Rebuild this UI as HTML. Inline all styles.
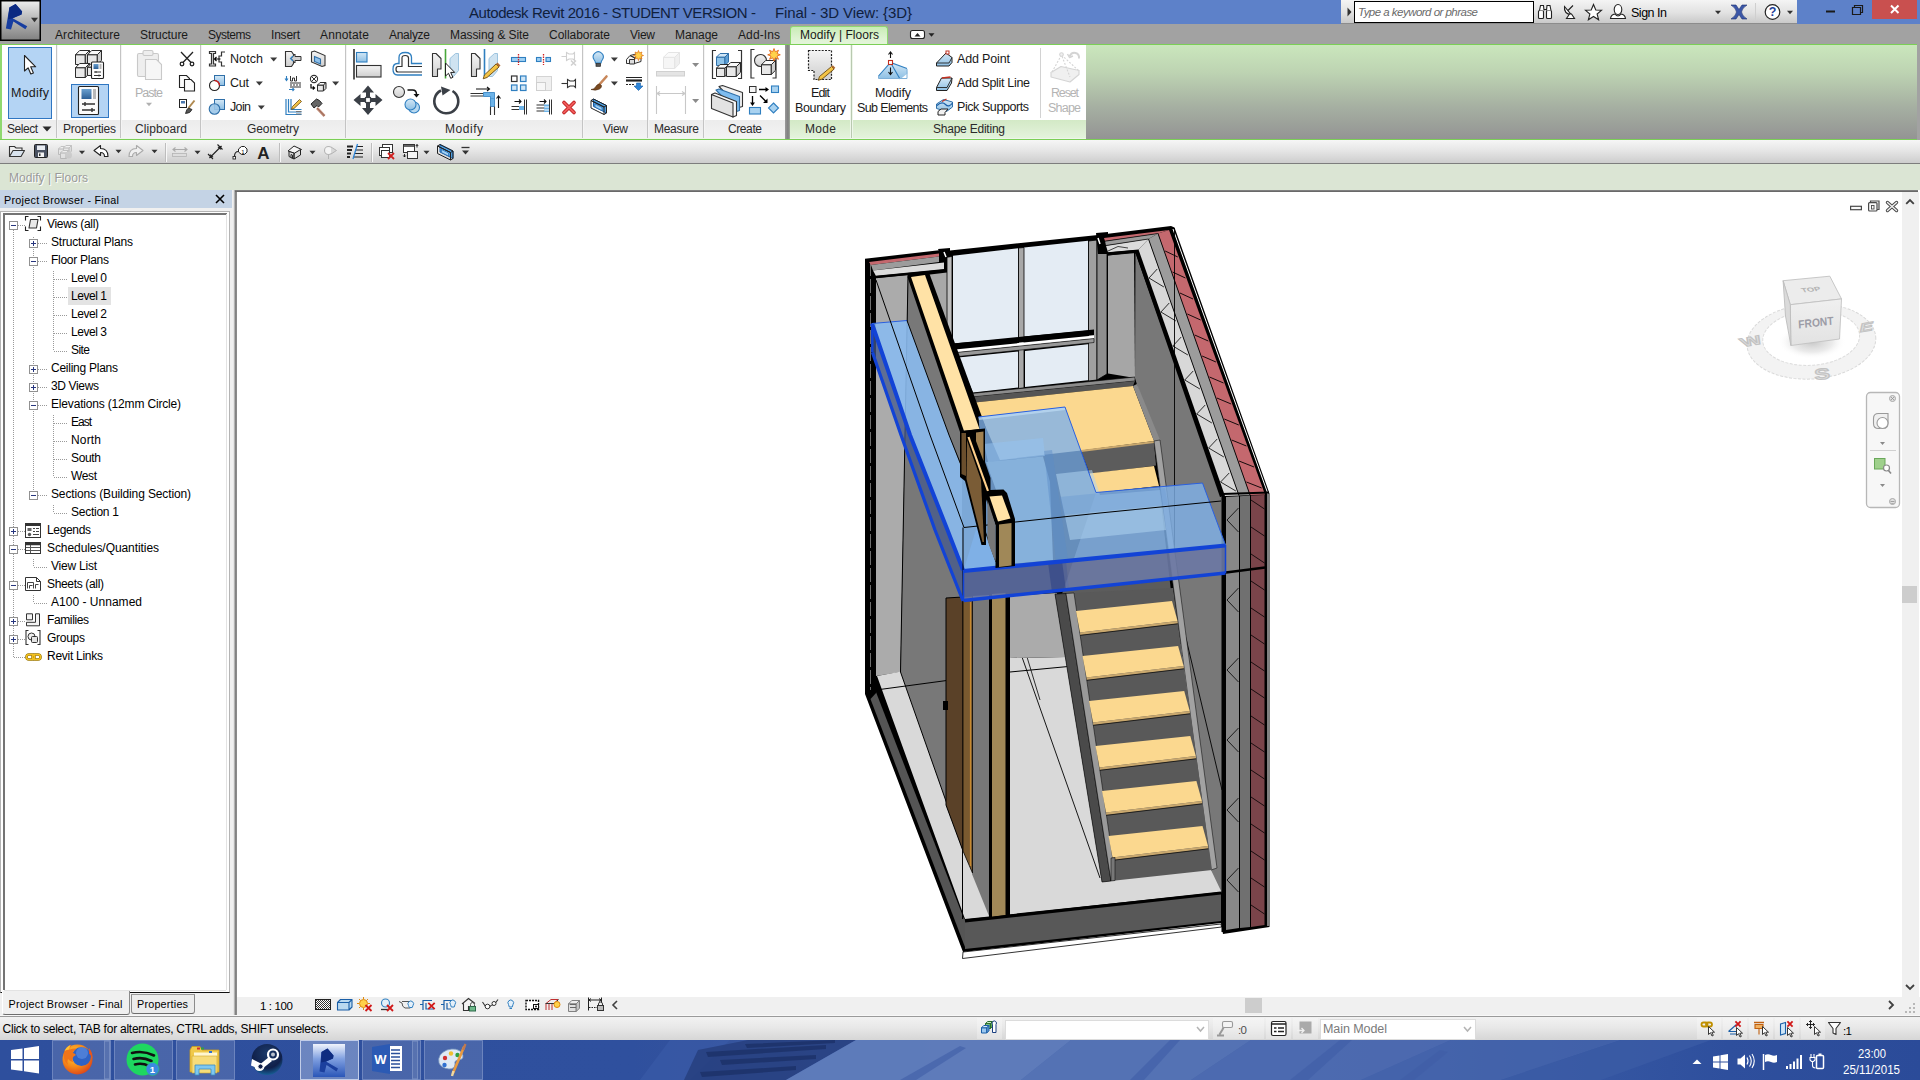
<!DOCTYPE html>
<html><head><meta charset="utf-8"><title>Autodesk Revit 2016</title>
<style>
html,body{margin:0;padding:0;}
body{width:1920px;height:1080px;overflow:hidden;position:relative;background:#fff;font-family:"Liberation Sans",sans-serif;}
.r{position:absolute;box-sizing:border-box;display:block;}
.t{position:absolute;white-space:pre;line-height:16px;height:16px;font-family:"Liberation Sans",sans-serif;}
</style></head><body>
<div class="r" style="left:0px;top:0px;width:1920px;height:24px;background:#5d81c9;"></div>
<div class="r" style="left:1341px;top:0px;width:456px;height:24px;background:linear-gradient(#f4f4f4,#e2e2e2 55%,#c9c9c9);border-bottom:1px solid #8c8c8c;"></div>
<div class="r" style="left:1354px;top:1px;width:180px;height:22px;background:#fff;border:1px solid #000;"></div>
<span class="t" style="left:1358px;top:4.02px;font-size:11.5px;color:#6a6a6a;letter-spacing:-0.526px;font-style:italic;">Type a keyword or phrase</span>
<span class="t" style="left:1631px;top:4.67px;font-size:12.5px;color:#000;letter-spacing:-0.486px;">Sign In</span>
<div class="r" style="left:1872px;top:0px;width:45px;height:19px;background:#c9504f;"></div>
<span class="t" style="left:469px;top:4.80px;font-size:15px;color:#10203c;letter-spacing:-0.425px;">Autodesk Revit 2016 - STUDENT VERSION -</span>
<span class="t" style="left:775px;top:4.80px;font-size:15px;color:#10203c;letter-spacing:-0.098px;">Final - 3D View: {3D}</span>
<div class="r" style="left:0px;top:24px;width:1920px;height:21px;background:#a2a2a2;"></div>
<div class="r" style="left:790px;top:26px;width:98px;height:20px;background:linear-gradient(#c9ecb6,#def3d2 60%,#e6f5dd);border:1px solid #8fd870;border-bottom:none;border-radius:3px 3px 0 0;"></div>
<span class="t" style="left:55px;top:26.84px;font-size:12px;color:#1a1a1a;letter-spacing:0.089px;">Architecture</span>
<span class="t" style="left:140px;top:26.84px;font-size:12px;color:#1a1a1a;letter-spacing:-0.086px;">Structure</span>
<span class="t" style="left:208px;top:26.84px;font-size:12px;color:#1a1a1a;letter-spacing:-0.501px;">Systems</span>
<span class="t" style="left:271px;top:26.84px;font-size:12px;color:#1a1a1a;letter-spacing:-0.202px;">Insert</span>
<span class="t" style="left:320px;top:26.84px;font-size:12px;color:#1a1a1a;letter-spacing:0.137px;">Annotate</span>
<span class="t" style="left:389px;top:26.84px;font-size:12px;color:#1a1a1a;letter-spacing:-0.282px;">Analyze</span>
<span class="t" style="left:450px;top:26.84px;font-size:12px;color:#1a1a1a;letter-spacing:-0.080px;">Massing &amp; Site</span>
<span class="t" style="left:549px;top:26.84px;font-size:12px;color:#1a1a1a;letter-spacing:-0.037px;">Collaborate</span>
<span class="t" style="left:630px;top:26.84px;font-size:12px;color:#1a1a1a;letter-spacing:-0.264px;">View</span>
<span class="t" style="left:675px;top:26.84px;font-size:12px;color:#1a1a1a;letter-spacing:-0.073px;">Manage</span>
<span class="t" style="left:738px;top:26.84px;font-size:12px;color:#1a1a1a;letter-spacing:0.107px;">Add-Ins</span>
<span class="t" style="left:800px;top:26.84px;font-size:12px;color:#1a1a1a;letter-spacing:0.038px;">Modify | Floors</span>
<div class="r" style="left:0px;top:44px;width:1920px;height:96px;background:linear-gradient(#cbe7bd,#bdd3b2 30%,#a6b0a2 65%,#939393 100%);"></div>
<div class="r" style="left:0px;top:44px;width:1920px;height:1px;background:#7bcf56;"></div>
<div class="r" style="left:0px;top:139px;width:1920px;height:1px;background:#7bcf56;"></div>
<div class="r" style="left:0px;top:138px;width:1086px;height:1px;background:#eef6ea;"></div>
<div class="r" style="left:0px;top:45px;width:2px;height:94px;background:#8fd870;"></div>
<div class="r" style="left:1917px;top:44px;width:3px;height:96px;background:#a2a2a2;"></div>
<div class="r" style="left:2px;top:45px;width:54px;height:75px;background:#fff;"></div>
<div class="r" style="left:2px;top:120px;width:54px;height:18px;background:linear-gradient(#ececec,#f3f3f3);"></div>
<span class="t" style="left:7px;top:121.24px;font-size:12px;color:#2a2a2a;letter-spacing:-0.470px;">Select</span>
<div class="r" style="left:58px;top:45px;width:62px;height:75px;background:#fff;"></div>
<div class="r" style="left:58px;top:120px;width:62px;height:18px;background:linear-gradient(#ececec,#f3f3f3);"></div>
<span class="t" style="left:63px;top:121.24px;font-size:12px;color:#2a2a2a;letter-spacing:-0.188px;">Properties</span>
<div class="r" style="left:122px;top:45px;width:78px;height:75px;background:#fff;"></div>
<div class="r" style="left:122px;top:120px;width:78px;height:18px;background:linear-gradient(#ececec,#f3f3f3);"></div>
<span class="t" style="left:135px;top:121.24px;font-size:12px;color:#2a2a2a;letter-spacing:0.080px;">Clipboard</span>
<div class="r" style="left:202px;top:45px;width:143px;height:75px;background:#fff;"></div>
<div class="r" style="left:202px;top:120px;width:143px;height:18px;background:linear-gradient(#ececec,#f3f3f3);"></div>
<span class="t" style="left:247px;top:121.24px;font-size:12px;color:#2a2a2a;letter-spacing:-0.097px;">Geometry</span>
<div class="r" style="left:347px;top:45px;width:235px;height:75px;background:#fff;"></div>
<div class="r" style="left:347px;top:120px;width:235px;height:18px;background:linear-gradient(#ececec,#f3f3f3);"></div>
<span class="t" style="left:445px;top:121.24px;font-size:12px;color:#2a2a2a;letter-spacing:0.531px;">Modify</span>
<div class="r" style="left:584px;top:45px;width:63px;height:75px;background:#fff;"></div>
<div class="r" style="left:584px;top:120px;width:63px;height:18px;background:linear-gradient(#ececec,#f3f3f3);"></div>
<span class="t" style="left:603px;top:121.24px;font-size:12px;color:#2a2a2a;letter-spacing:-0.264px;">View</span>
<div class="r" style="left:649px;top:45px;width:54px;height:75px;background:#fff;"></div>
<div class="r" style="left:649px;top:120px;width:54px;height:18px;background:linear-gradient(#ececec,#f3f3f3);"></div>
<span class="t" style="left:654px;top:121.24px;font-size:12px;color:#2a2a2a;letter-spacing:-0.281px;">Measure</span>
<div class="r" style="left:705px;top:45px;width:80px;height:75px;background:#fff;"></div>
<div class="r" style="left:705px;top:120px;width:80px;height:18px;background:linear-gradient(#ececec,#f3f3f3);"></div>
<span class="t" style="left:728px;top:121.24px;font-size:12px;color:#2a2a2a;letter-spacing:-0.404px;">Create</span>
<div class="r" style="left:790px;top:45px;width:60px;height:75px;background:#fff;"></div>
<div class="r" style="left:790px;top:120px;width:60px;height:18px;background:linear-gradient(#d3e9c6,#e4f3dc);"></div>
<span class="t" style="left:805px;top:121.24px;font-size:12px;color:#2a2a2a;letter-spacing:0.327px;">Mode</span>
<div class="r" style="left:853px;top:45px;width:233px;height:75px;background:#fff;"></div>
<div class="r" style="left:853px;top:120px;width:233px;height:18px;background:linear-gradient(#d3e9c6,#e4f3dc);"></div>
<span class="t" style="left:933px;top:121.24px;font-size:12px;color:#2a2a2a;letter-spacing:-0.227px;">Shape Editing</span>
<div class="r" style="left:56px;top:45px;width:2px;height:93px;background:linear-gradient(90deg,#c4c4c4 50%,#f4f4f4 50%);"></div>
<div class="r" style="left:120px;top:45px;width:2px;height:93px;background:linear-gradient(90deg,#c4c4c4 50%,#f4f4f4 50%);"></div>
<div class="r" style="left:200px;top:45px;width:2px;height:93px;background:linear-gradient(90deg,#c4c4c4 50%,#f4f4f4 50%);"></div>
<div class="r" style="left:345px;top:45px;width:2px;height:93px;background:linear-gradient(90deg,#c4c4c4 50%,#f4f4f4 50%);"></div>
<div class="r" style="left:582px;top:45px;width:2px;height:93px;background:linear-gradient(90deg,#c4c4c4 50%,#f4f4f4 50%);"></div>
<div class="r" style="left:647px;top:45px;width:2px;height:93px;background:linear-gradient(90deg,#c4c4c4 50%,#f4f4f4 50%);"></div>
<div class="r" style="left:703px;top:45px;width:2px;height:93px;background:linear-gradient(90deg,#c4c4c4 50%,#f4f4f4 50%);"></div>
<div class="r" style="left:785px;top:45px;width:5px;height:94px;background:linear-gradient(90deg,#9a9a9a,#7e7e7e 60%,#a0a89c);"></div>
<div class="r" style="left:850px;top:45px;width:3px;height:93px;background:linear-gradient(90deg,#eef6ea 33%,#b9c9b0 33%,#b9c9b0 66%,#eef6ea 66%);"></div>
<div class="r" style="left:1040px;top:48px;width:1px;height:70px;background:#d2d2d2;"></div>
<svg class="r" style="left:42px;top:126px;" width="10" height="6" viewBox="0 0 10 6"><path d="M0.5 0.5h9l-4.5 5z" fill="#2a2a2a"/></svg>
<div class="r" style="left:8px;top:47px;width:44px;height:72px;background:#b4d4f4;border:1px solid #2f76c2;"></div>
<span class="t" style="left:11px;top:84.67px;font-size:12.5px;color:#1a1a1a;letter-spacing:0.237px;">Modify</span>
<div class="r" style="left:71px;top:84px;width:38px;height:34px;background:#b4d4f4;border:1px solid #2f76c2;"></div>
<span class="t" style="left:135px;top:84.67px;font-size:12.5px;color:#b0b0b0;letter-spacing:-0.991px;">Paste</span>
<span class="t" style="left:230px;top:50.67px;font-size:12.5px;color:#1a1a1a;letter-spacing:0.087px;">Notch</span>
<span class="t" style="left:230px;top:74.67px;font-size:12.5px;color:#1a1a1a;letter-spacing:-0.226px;">Cut</span>
<span class="t" style="left:230px;top:98.67px;font-size:12.5px;color:#1a1a1a;letter-spacing:-0.644px;">Join</span>
<span class="t" style="left:811px;top:84.67px;font-size:12.5px;color:#1a1a1a;letter-spacing:-0.846px;">Edit</span>
<span class="t" style="left:795px;top:99.67px;font-size:12.5px;color:#1a1a1a;letter-spacing:-0.359px;">Boundary</span>
<span class="t" style="left:875px;top:84.67px;font-size:12.5px;color:#1a1a1a;letter-spacing:-0.163px;">Modify</span>
<span class="t" style="left:857px;top:99.67px;font-size:12.5px;color:#1a1a1a;letter-spacing:-0.620px;">Sub Elements</span>
<span class="t" style="left:957px;top:50.67px;font-size:12.5px;color:#1a1a1a;letter-spacing:-0.151px;">Add Point</span>
<span class="t" style="left:957px;top:74.67px;font-size:12.5px;color:#1a1a1a;letter-spacing:-0.318px;">Add Split Line</span>
<span class="t" style="left:957px;top:98.67px;font-size:12.5px;color:#1a1a1a;letter-spacing:-0.427px;">Pick Supports</span>
<span class="t" style="left:1051px;top:84.67px;font-size:12.5px;color:#b4b4b4;letter-spacing:-1.163px;">Reset</span>
<span class="t" style="left:1048px;top:99.67px;font-size:12.5px;color:#b4b4b4;letter-spacing:-0.786px;">Shape</span>
<div class="r" style="left:0px;top:140px;width:1920px;height:24px;background:linear-gradient(#f6f6f6,#e6e6e6 45%,#cdcdcd);border-bottom:1px solid #7d7d7d;"></div>
<div class="r" style="left:0px;top:164px;width:1920px;height:26px;background:#dbe5d4;"></div>
<span class="t" style="left:10px;top:171.34px;font-size:12px;color:#fff;letter-spacing:0.038px;">Modify | Floors</span>
<span class="t" style="left:9px;top:170.34px;font-size:12px;color:#9a9a9a;letter-spacing:0.038px;">Modify | Floors</span>
<div class="r" style="left:0px;top:190px;width:236px;height:826px;background:#f0f0f0;"></div>
<div class="r" style="left:0px;top:190px;width:232px;height:18px;background:#c4d3e5;"></div>
<div class="r" style="left:232px;top:190px;width:4px;height:825px;background:linear-gradient(90deg,#f0f0f0 0,#f0f0f0 25%,#e4e4e4 40%,#a4a4a4 70%,#6a6a6a 100%);"></div>
<span class="t" style="left:4px;top:191.86px;font-size:10.8px;color:#000;letter-spacing:0.262px;">Project Browser - Final</span>
<svg class="r" style="left:215px;top:194px;" width="10" height="10" viewBox="0 0 10 10"><path d="M1 1l8 8M9 1l-8 8" stroke="#000" stroke-width="1.6" fill="none"/></svg>
<div class="r" style="left:0px;top:211px;width:230px;height:782px;background:#fff;border:1px solid #b4b4b4;border-bottom:1px solid #111;"></div>
<div class="r" style="left:3px;top:213px;width:1.6px;height:777px;background:#747474;"></div>
<div class="r" style="left:3px;top:213px;width:224px;height:1.6px;background:#747474;"></div>
<div class="r" style="left:225.5px;top:214px;width:1px;height:776px;background:#e3e3e3;"></div>
<div class="r" style="left:4px;top:989.5px;width:222px;height:1px;background:#e3e3e3;"></div>
<div class="r" style="left:68px;top:287px;width:43px;height:18px;background:#e3e3e3;"></div>
<span class="t" style="left:47px;top:215.84px;font-size:12px;color:#000;letter-spacing:-0.313px;">Views (all)</span>
<span class="t" style="left:51px;top:233.84px;font-size:12px;color:#000;letter-spacing:-0.180px;">Structural Plans</span>
<span class="t" style="left:51px;top:251.84px;font-size:12px;color:#000;letter-spacing:-0.269px;">Floor Plans</span>
<span class="t" style="left:71px;top:269.84px;font-size:12px;color:#000;letter-spacing:-0.449px;">Level 0</span>
<span class="t" style="left:71px;top:287.84px;font-size:12px;color:#000;letter-spacing:-0.449px;">Level 1</span>
<span class="t" style="left:71px;top:305.84px;font-size:12px;color:#000;letter-spacing:-0.449px;">Level 2</span>
<span class="t" style="left:71px;top:323.84px;font-size:12px;color:#000;letter-spacing:-0.449px;">Level 3</span>
<span class="t" style="left:71px;top:341.84px;font-size:12px;color:#000;letter-spacing:-0.559px;">Site</span>
<span class="t" style="left:51px;top:359.84px;font-size:12px;color:#000;letter-spacing:-0.253px;">Ceiling Plans</span>
<span class="t" style="left:51px;top:377.84px;font-size:12px;color:#000;letter-spacing:-0.352px;">3D Views</span>
<span class="t" style="left:51px;top:395.84px;font-size:12px;color:#000;letter-spacing:-0.175px;">Elevations (12mm Circle)</span>
<span class="t" style="left:71px;top:413.84px;font-size:12px;color:#000;letter-spacing:-1.004px;">East</span>
<span class="t" style="left:71px;top:431.84px;font-size:12px;color:#000;letter-spacing:0.164px;">North</span>
<span class="t" style="left:71px;top:449.84px;font-size:12px;color:#000;letter-spacing:-0.340px;">South</span>
<span class="t" style="left:71px;top:467.84px;font-size:12px;color:#000;letter-spacing:-0.372px;">West</span>
<span class="t" style="left:51px;top:485.84px;font-size:12px;color:#000;letter-spacing:-0.131px;">Sections (Building Section)</span>
<span class="t" style="left:71px;top:503.84px;font-size:12px;color:#000;letter-spacing:-0.254px;">Section 1</span>
<span class="t" style="left:47px;top:521.84px;font-size:12px;color:#000;letter-spacing:-0.341px;">Legends</span>
<span class="t" style="left:47px;top:539.84px;font-size:12px;color:#000;letter-spacing:-0.074px;">Schedules/Quantities</span>
<span class="t" style="left:51px;top:557.84px;font-size:12px;color:#000;letter-spacing:-0.225px;">View List</span>
<span class="t" style="left:47px;top:575.84px;font-size:12px;color:#000;letter-spacing:-0.336px;">Sheets (all)</span>
<span class="t" style="left:51px;top:593.84px;font-size:12px;color:#000;letter-spacing:0.021px;">A100 - Unnamed</span>
<span class="t" style="left:47px;top:611.84px;font-size:12px;color:#000;letter-spacing:-0.382px;">Families</span>
<span class="t" style="left:47px;top:629.84px;font-size:12px;color:#000;letter-spacing:-0.270px;">Groups</span>
<span class="t" style="left:47px;top:647.84px;font-size:12px;color:#000;letter-spacing:-0.269px;">Revit Links</span>
<svg class="r" style="left:0px;top:192px;" width="232" height="500" viewBox="0 192 232 500"><path d="M13.5 230V657" stroke="#9a9a9a" stroke-width="1" stroke-dasharray="1 1"/><path d="M33.5 237V495" stroke="#9a9a9a" stroke-width="1" stroke-dasharray="1 1"/><path d="M53.5 271V351" stroke="#9a9a9a" stroke-width="1" stroke-dasharray="1 1"/><path d="M53.5 415V477" stroke="#9a9a9a" stroke-width="1" stroke-dasharray="1 1"/><path d="M53.5 505V513" stroke="#9a9a9a" stroke-width="1" stroke-dasharray="1 1"/><path d="M33.5 559V567" stroke="#9a9a9a" stroke-width="1" stroke-dasharray="1 1"/><path d="M33.5 595V603" stroke="#9a9a9a" stroke-width="1" stroke-dasharray="1 1"/><path d="M18 225.5H26" stroke="#9a9a9a" stroke-width="1" stroke-dasharray="1 1"/><path d="M18 531.5H26" stroke="#9a9a9a" stroke-width="1" stroke-dasharray="1 1"/><path d="M18 549.5H26" stroke="#9a9a9a" stroke-width="1" stroke-dasharray="1 1"/><path d="M18 585.5H26" stroke="#9a9a9a" stroke-width="1" stroke-dasharray="1 1"/><path d="M18 621.5H26" stroke="#9a9a9a" stroke-width="1" stroke-dasharray="1 1"/><path d="M18 639.5H26" stroke="#9a9a9a" stroke-width="1" stroke-dasharray="1 1"/><path d="M14 657.5H26" stroke="#9a9a9a" stroke-width="1" stroke-dasharray="1 1"/><path d="M38 243.5H48" stroke="#9a9a9a" stroke-width="1" stroke-dasharray="1 1"/><path d="M38 261.5H48" stroke="#9a9a9a" stroke-width="1" stroke-dasharray="1 1"/><path d="M38 369.5H48" stroke="#9a9a9a" stroke-width="1" stroke-dasharray="1 1"/><path d="M38 387.5H48" stroke="#9a9a9a" stroke-width="1" stroke-dasharray="1 1"/><path d="M38 405.5H48" stroke="#9a9a9a" stroke-width="1" stroke-dasharray="1 1"/><path d="M38 495.5H48" stroke="#9a9a9a" stroke-width="1" stroke-dasharray="1 1"/><path d="M54 279.5H68" stroke="#9a9a9a" stroke-width="1" stroke-dasharray="1 1"/><path d="M54 297.5H68" stroke="#9a9a9a" stroke-width="1" stroke-dasharray="1 1"/><path d="M54 315.5H68" stroke="#9a9a9a" stroke-width="1" stroke-dasharray="1 1"/><path d="M54 333.5H68" stroke="#9a9a9a" stroke-width="1" stroke-dasharray="1 1"/><path d="M54 351.5H68" stroke="#9a9a9a" stroke-width="1" stroke-dasharray="1 1"/><path d="M54 423.5H68" stroke="#9a9a9a" stroke-width="1" stroke-dasharray="1 1"/><path d="M54 441.5H68" stroke="#9a9a9a" stroke-width="1" stroke-dasharray="1 1"/><path d="M54 459.5H68" stroke="#9a9a9a" stroke-width="1" stroke-dasharray="1 1"/><path d="M54 477.5H68" stroke="#9a9a9a" stroke-width="1" stroke-dasharray="1 1"/><path d="M54 513.5H68" stroke="#9a9a9a" stroke-width="1" stroke-dasharray="1 1"/><path d="M34 567.5H48" stroke="#9a9a9a" stroke-width="1" stroke-dasharray="1 1"/><path d="M34 603.5H48" stroke="#9a9a9a" stroke-width="1" stroke-dasharray="1 1"/><rect x="9.5" y="221.5" width="8" height="8" fill="#fff" stroke="#919191"/><path d="M11 225.5h5" stroke="#27367e" stroke-width="1"/><rect x="9.5" y="527.5" width="8" height="8" fill="#fff" stroke="#919191"/><path d="M11 531.5h5" stroke="#27367e" stroke-width="1"/><path d="M13.5 529v5" stroke="#27367e" stroke-width="1"/><rect x="9.5" y="545.5" width="8" height="8" fill="#fff" stroke="#919191"/><path d="M11 549.5h5" stroke="#27367e" stroke-width="1"/><rect x="9.5" y="581.5" width="8" height="8" fill="#fff" stroke="#919191"/><path d="M11 585.5h5" stroke="#27367e" stroke-width="1"/><rect x="9.5" y="617.5" width="8" height="8" fill="#fff" stroke="#919191"/><path d="M11 621.5h5" stroke="#27367e" stroke-width="1"/><path d="M13.5 619v5" stroke="#27367e" stroke-width="1"/><rect x="9.5" y="635.5" width="8" height="8" fill="#fff" stroke="#919191"/><path d="M11 639.5h5" stroke="#27367e" stroke-width="1"/><path d="M13.5 637v5" stroke="#27367e" stroke-width="1"/><rect x="29.5" y="239.5" width="8" height="8" fill="#fff" stroke="#919191"/><path d="M31 243.5h5" stroke="#27367e" stroke-width="1"/><path d="M33.5 241v5" stroke="#27367e" stroke-width="1"/><rect x="29.5" y="257.5" width="8" height="8" fill="#fff" stroke="#919191"/><path d="M31 261.5h5" stroke="#27367e" stroke-width="1"/><rect x="29.5" y="365.5" width="8" height="8" fill="#fff" stroke="#919191"/><path d="M31 369.5h5" stroke="#27367e" stroke-width="1"/><path d="M33.5 367v5" stroke="#27367e" stroke-width="1"/><rect x="29.5" y="383.5" width="8" height="8" fill="#fff" stroke="#919191"/><path d="M31 387.5h5" stroke="#27367e" stroke-width="1"/><path d="M33.5 385v5" stroke="#27367e" stroke-width="1"/><rect x="29.5" y="401.5" width="8" height="8" fill="#fff" stroke="#919191"/><path d="M31 405.5h5" stroke="#27367e" stroke-width="1"/><rect x="29.5" y="491.5" width="8" height="8" fill="#fff" stroke="#919191"/><path d="M31 495.5h5" stroke="#27367e" stroke-width="1"/></svg>
<div class="r" style="left:2px;top:990.5px;width:128px;height:24.5px;background:#f0f0f0;border:1px solid #8b8b8b;border-top:none;border-left:1px solid #fff;border-bottom:1.5px solid #6e6e6e;border-radius:0 0 3px 3px;"></div>
<div class="r" style="left:131px;top:994px;width:64px;height:20px;background:#ececec;border:1px solid #8b8b8b;border-top:1px solid #9a9a9a;border-bottom:1.5px solid #6e6e6e;border-radius:0 0 3px 3px;"></div>
<span class="t" style="left:8.5px;top:995.86px;font-size:10.8px;color:#000;letter-spacing:0.217px;">Project Browser - Final</span>
<span class="t" style="left:137px;top:995.86px;font-size:10.8px;color:#000;letter-spacing:0.197px;">Properties</span>
<div class="r" style="left:235px;top:190px;width:1683px;height:2px;background:linear-gradient(#8a8a8a,#5e5e5e);"></div>
<div class="r" style="left:236px;top:192px;width:1px;height:824px;background:#8a8a8a;"></div>
<div class="r" style="left:237px;top:192px;width:1665px;height:805px;background:#fff;"></div>
<div class="r" style="left:1902px;top:192px;width:17px;height:805px;background:#f0f0f0;"></div>
<div class="r" style="left:1919px;top:192px;width:1px;height:805px;background:#fff;"></div>
<div class="r" style="left:1902px;top:586px;width:15px;height:17px;background:#cdcdcd;"></div>
<svg class="r" style="left:1905px;top:197.5px;" width="10" height="7" viewBox="0 0 10 7"><path d="M1.2 5.800l3.800-3.800 3.800 3.800" stroke="#404040" stroke-width="1.8" fill="none"/></svg>
<svg class="r" style="left:1905px;top:984px;" width="10" height="7" viewBox="0 0 10 7"><path d="M1 1l4 4 4-4" stroke="#404040" stroke-width="1.8" fill="none"/></svg>
<div class="r" style="left:237px;top:997px;width:1683px;height:19px;background:#f0f0f0;"></div>
<div class="r" style="left:1245px;top:998px;width:17px;height:15px;background:#cdcdcd;"></div>
<svg class="r" style="left:1888px;top:1000px;" width="7" height="10" viewBox="0 0 7 10"><path d="M1 1l4 4-4 4" stroke="#404040" stroke-width="1.8" fill="none"/></svg>
<svg class="r" style="left:611px;top:1000px;" width="7" height="10" viewBox="0 0 7 10"><path d="M6 1l-4 4 4 4" stroke="#404040" stroke-width="1.6" fill="none"/></svg>
<span class="t" style="left:260px;top:998.02px;font-size:11.5px;color:#000;letter-spacing:-0.361px;">1 : 100</span>
<svg class="r" style="left:1849px;top:199px;" width="50" height="14" viewBox="0 0 50 14"><rect x="1.6" y="7.3" width="10.800" height="3.400" fill="#fafafa" stroke="#4a4a4a" stroke-width="1.200"/><path d="M21.500 3.500v-1.500h8.500v8.500h-2" fill="#f4f4f4" stroke="#4a4a4a" stroke-width="1.200"/><rect x="19.600" y="3.600" width="8.400" height="8.400" rx="1" fill="#fafafa" stroke="#4a4a4a" stroke-width="1.200"/><rect x="22.500" y="6.500" width="2.500" height="3.500" fill="none" stroke="#4a4a4a" stroke-width="0.900"/><path d="M38.500 3.500l9 8M47.500 3.500l-9 8" stroke="#4a4a4a" stroke-width="3.400" stroke-linecap="round"/><path d="M38.500 3.500l9 8M47.500 3.500l-9 8" stroke="#f2f2f2" stroke-width="1.400" stroke-linecap="round"/></svg>
<div class="r" style="left:0px;top:1015px;width:1920px;height:1px;background:#f8f8f8;"></div>
<div class="r" style="left:0px;top:1016px;width:1920px;height:1px;background:#9a9a9a;"></div>
<div class="r" style="left:0px;top:1017px;width:1920px;height:23px;background:linear-gradient(#f2f2f2,#e8e8e8 45%,#d6d6d6);"></div>
<span class="t" style="left:2.6px;top:1020.84px;font-size:12px;color:#000;letter-spacing:-0.249px;">Click to select, TAB for alternates, CTRL adds, SHIFT unselects.</span>
<div class="r" style="left:1005px;top:1020px;width:204px;height:20px;background:#fff;border:1px solid #dcdcdc;"></div>
<svg class="r" style="left:1196px;top:1026px;" width="9" height="7" viewBox="0 0 9 7"><path d="M1 1l3.5 4 3.5-4" stroke="#b4b4b4" stroke-width="1.5" fill="none"/></svg>
<span class="t" style="left:1238px;top:1022.02px;font-size:11.5px;color:#000;letter-spacing:-0.591px;">:0</span>
<div class="r" style="left:1320px;top:1019px;width:156px;height:21px;background:#fff;border:1px solid #dcdcdc;"></div>
<span class="t" style="left:1323px;top:1020.67px;font-size:12.5px;color:#7a7a7a;letter-spacing:-0.068px;">Main Model</span>
<svg class="r" style="left:1463px;top:1026px;" width="9" height="7" viewBox="0 0 9 7"><path d="M1 1l3.5 4 3.5-4" stroke="#b4b4b4" stroke-width="1.5" fill="none"/></svg>
<span class="t" style="left:1843px;top:1023.02px;font-size:11.5px;color:#000;letter-spacing:-0.591px;">:1</span>
<svg class="r" style="left:0;top:0" width="1920" height="1080" viewBox="0 0 1920 1080"><polygon points="865,258.7 939,250.3 950,250.4 1098,235 1171,226 1174.5,227.5 1269.5,493.5 1269.5,927 1223,934 1221,923 963,952 865,694" fill="#000" stroke="none" stroke-width="1" stroke-linejoin="round" /><polyline points="1173,229 1268,494 1268,926" fill="none" stroke="#fff" stroke-width="1" stroke-linejoin="round" /><polygon points="963,952 1221,924 1221.5,927 962.5,958.5" fill="#fff" stroke="#000" stroke-width="0.8" stroke-linejoin="round" /><polygon points="876,278 908,275 900.5,672 876,676" fill="#ababab" stroke="none" stroke-width="1" stroke-linejoin="round" /><polyline points="870.5,262 870.5,690" fill="none" stroke="#8a8a8a" stroke-width="0.8" stroke-linejoin="round" stroke-dasharray="14 3"/><polygon points="870.5,699 877,692 965,919 965,947" fill="#555" stroke="none" stroke-width="1" stroke-linejoin="round" /><polyline points="877,692 965,919" fill="none" stroke="#000" stroke-width="2" stroke-linejoin="round" /><polygon points="877,676 901,671.5 1010,658 1066,657 1222,640 1221,892 965,919" fill="#d9d9d9" stroke="none" stroke-width="1" stroke-linejoin="round" /><polygon points="908,277 962,432 962,600 946,600 946,805 962.5,848 900.5,672" fill="#787878" stroke="none" stroke-width="1" stroke-linejoin="round" /><polyline points="908,277 900.5,672 962.5,848 962.5,919" fill="none" stroke="#000" stroke-width="1" stroke-linejoin="round" /><polyline points="876,690 1010,672 1222,652" fill="none" stroke="#000" stroke-width="1" stroke-linejoin="round" /><polyline points="1022,657 1100,878" fill="none" stroke="#000" stroke-width="0.9" stroke-linejoin="round" /><polyline points="1027,657 1040,700" fill="none" stroke="#000" stroke-width="0.8" stroke-linejoin="round" /><polygon points="1010,596 1057,593 1066,657 1010,658" fill="#ababab" stroke="none" stroke-width="1" stroke-linejoin="round" /><polygon points="972,596 989,595 989,916 972,874" fill="#787878" stroke="none" stroke-width="1" stroke-linejoin="round" /><polygon points="946,598 963,597 963,851 946,805" fill="#5a4128" stroke="#000" stroke-width="1" stroke-linejoin="round" /><polygon points="963,597 972.5,596 972.5,873 963,851" fill="#7a5a30" stroke="#000" stroke-width="0.8" stroke-linejoin="round" /><polyline points="970.5,602 970.5,866" fill="none" stroke="#c88a30" stroke-width="1.2" stroke-linejoin="round" /><polygon points="943,701 948,701 948,710 943,710" fill="#000" stroke="none" stroke-width="1" stroke-linejoin="round" /><polygon points="989,594 1010,592 1010,915 989,917.5" fill="#000" stroke="none" stroke-width="1" stroke-linejoin="round" /><polygon points="992,594 1005.5,593 1005.5,915 992,917" fill="#a08858" stroke="none" stroke-width="1" stroke-linejoin="round" /><polygon points="965,921 1221,893 1221,921 965,949" fill="#585858" stroke="none" stroke-width="1" stroke-linejoin="round" /><polyline points="965,921 1221,893" fill="none" stroke="#000" stroke-width="3" stroke-linejoin="round" /><polygon points="869,262 939,253.5 939,256.5 871,265" fill="#c4686e" stroke="none" stroke-width="1" stroke-linejoin="round" /><polygon points="871,265 939,256.5 939,262 873,270.5" fill="#9c9c9c" stroke="none" stroke-width="1" stroke-linejoin="round" /><polygon points="873,270.5 944,262.5 944,269.5 876,276" fill="#dcdcdc" stroke="none" stroke-width="1" stroke-linejoin="round" /><polyline points="876,277 947,270" fill="none" stroke="#000" stroke-width="2.5" stroke-linejoin="round" /><polygon points="926,275 947,272.5 947,345 955,345" fill="#a8a8a8" stroke="none" stroke-width="1" stroke-linejoin="round" /><polygon points="947,257 952,256.5 952,345 947,345" fill="#bdbdbd" stroke="#000" stroke-width="0.8" stroke-linejoin="round" /><polygon points="953,255.8 1018,248.3 1018,338 953,343.5" fill="#e4ecf4" stroke="none" stroke-width="1" stroke-linejoin="round" /><polygon points="1024,247.6 1088,240.8 1088,330.5 1024,336.5" fill="#e4ecf4" stroke="none" stroke-width="1" stroke-linejoin="round" /><polygon points="958,357.5 1018.5,351.5 1018.5,387.5 973,392.5" fill="#e4ecf4" stroke="none" stroke-width="1" stroke-linejoin="round" /><polygon points="1025,351 1090,344 1090,380 1025,387" fill="#e4ecf4" stroke="none" stroke-width="1" stroke-linejoin="round" /><polygon points="1018.5,248 1024,247.5 1024,388 1018.5,388.5" fill="#a8a8a8" stroke="#000" stroke-width="0.8" stroke-linejoin="round" /><polygon points="1088.5,241 1097,240 1097,380 1088.5,381" fill="#a0a0a0" stroke="#000" stroke-width="0.8" stroke-linejoin="round" /><polygon points="1097,240 1107,254 1107,374 1097,380" fill="#8e8e8e" stroke="#000" stroke-width="0.8" stroke-linejoin="round" /><polygon points="953,343.5 1094,329.5 1094,335 953,349" fill="#000" stroke="none" stroke-width="1" stroke-linejoin="round" /><polygon points="955,349.5 1094,335.5 1094,338.5 956,352.5" fill="#fff" stroke="none" stroke-width="1" stroke-linejoin="round" /><polygon points="956,352.5 1094,338.5 1094,342.5 958,356.5" fill="#999" stroke="#000" stroke-width="0.6" stroke-linejoin="round" /><polygon points="938,249 950,248 950,257 942,258" fill="#000" stroke="none" stroke-width="1" stroke-linejoin="round" /><polygon points="1096,233 1108,232 1108,254 1098,254" fill="#000" stroke="none" stroke-width="1" stroke-linejoin="round" /><polyline points="944,252 946,257" fill="none" stroke="#fff" stroke-width="1.5" stroke-linejoin="round" /><polyline points="1098,238 1100,244" fill="none" stroke="#fff" stroke-width="1.5" stroke-linejoin="round" /><polygon points="1108,255.5 1134,252.5 1135,378 1108,373.5" fill="#a6a6a6" stroke="none" stroke-width="1" stroke-linejoin="round" /><polygon points="971,393.5 1135,377 1135,381 972,397" fill="#8c8c8c" stroke="#000" stroke-width="0.6" stroke-linejoin="round" /><polygon points="972,397 1135,381 1133,386 975,402.5" fill="#555" stroke="none" stroke-width="1" stroke-linejoin="round" /><polygon points="1135.5,253 1222,497 1222,893 1211,870 1154,441 1135,378" fill="#787878" stroke="none" stroke-width="1" stroke-linejoin="round" /><polygon points="1104,238 1169,230 1158,233.5 1105,241" fill="#c4686e" stroke="none" stroke-width="1" stroke-linejoin="round" /><polygon points="1105,241.3 1158,233.5 1148.5,239 1106,245.5" fill="#9c9c9c" stroke="none" stroke-width="1" stroke-linejoin="round" /><polygon points="1106,245.8 1148.5,239 1138.5,249.5 1108,252.3" fill="#dcdcdc" stroke="none" stroke-width="1" stroke-linejoin="round" /><polyline points="1105.5,245.6 1148.5,239" fill="none" stroke="#000" stroke-width="0.7" stroke-linejoin="round" /><polyline points="1105,241.2 1158,233.5" fill="none" stroke="#000" stroke-width="0.7" stroke-linejoin="round" /><polyline points="1107.5,254 1136,251.5" fill="none" stroke="#000" stroke-width="3" stroke-linejoin="round" /><polyline points="1108,251 1118,246.5 1128,248" fill="none" stroke="#000" stroke-width="0.7" stroke-linejoin="round" /><polygon points="1135.5,253 1138.5,249.5 1225,496 1220,497" fill="#000" stroke="none" stroke-width="1" stroke-linejoin="round" /><polygon points="1138.5,249.5 1148.5,239 1239,495.6 1225,496" fill="#d8d8d8" stroke="none" stroke-width="1" stroke-linejoin="round" /><polygon points="1148.5,239 1158,233.5 1250,495 1239,495.6" fill="#9c9c9c" stroke="none" stroke-width="1" stroke-linejoin="round" /><polygon points="1158,233.5 1169,230 1265,494.4 1250,495" fill="#c4686e" stroke="none" stroke-width="1" stroke-linejoin="round" /><polyline points="1149,278 1157.23,269" fill="none" stroke="#000" stroke-width="0.8" stroke-linejoin="round" /><polyline points="1149,278 1163.93,287" fill="none" stroke="#000" stroke-width="0.8" stroke-linejoin="round" /><polyline points="1160.93,312 1169.22,303" fill="none" stroke="#000" stroke-width="0.8" stroke-linejoin="round" /><polyline points="1160.93,312 1175.92,321" fill="none" stroke="#000" stroke-width="0.8" stroke-linejoin="round" /><polyline points="1172.86,346 1181.21,337" fill="none" stroke="#000" stroke-width="0.8" stroke-linejoin="round" /><polyline points="1172.86,346 1187.91,355" fill="none" stroke="#000" stroke-width="0.8" stroke-linejoin="round" /><polyline points="1184.79,380 1193.2,371" fill="none" stroke="#000" stroke-width="0.8" stroke-linejoin="round" /><polyline points="1184.79,380 1199.9,389" fill="none" stroke="#000" stroke-width="0.8" stroke-linejoin="round" /><polyline points="1196.73,414 1205.19,405" fill="none" stroke="#000" stroke-width="0.8" stroke-linejoin="round" /><polyline points="1196.73,414 1211.89,423" fill="none" stroke="#000" stroke-width="0.8" stroke-linejoin="round" /><polyline points="1208.66,448 1217.19,439" fill="none" stroke="#000" stroke-width="0.8" stroke-linejoin="round" /><polyline points="1208.66,448 1223.89,457" fill="none" stroke="#000" stroke-width="0.8" stroke-linejoin="round" /><polyline points="1220.59,482 1229.18,473" fill="none" stroke="#000" stroke-width="0.8" stroke-linejoin="round" /><polyline points="1220.59,482 1235.88,491" fill="none" stroke="#000" stroke-width="0.8" stroke-linejoin="round" /><polyline points="1165.16,251 1177.8,257" fill="none" stroke="#000" stroke-width="0.9" stroke-linejoin="round" /><polyline points="1172.54,272 1185.43,278" fill="none" stroke="#000" stroke-width="0.9" stroke-linejoin="round" /><polyline points="1179.93,293 1193.05,299" fill="none" stroke="#000" stroke-width="0.9" stroke-linejoin="round" /><polyline points="1187.32,314 1200.68,320" fill="none" stroke="#000" stroke-width="0.9" stroke-linejoin="round" /><polyline points="1194.71,335 1208.3,341" fill="none" stroke="#000" stroke-width="0.9" stroke-linejoin="round" /><polyline points="1202.1,356 1215.93,362" fill="none" stroke="#000" stroke-width="0.9" stroke-linejoin="round" /><polyline points="1209.49,377 1223.55,383" fill="none" stroke="#000" stroke-width="0.9" stroke-linejoin="round" /><polyline points="1216.87,398 1231.18,404" fill="none" stroke="#000" stroke-width="0.9" stroke-linejoin="round" /><polyline points="1224.26,419 1238.8,425" fill="none" stroke="#000" stroke-width="0.9" stroke-linejoin="round" /><polyline points="1231.65,440 1246.43,446" fill="none" stroke="#000" stroke-width="0.9" stroke-linejoin="round" /><polyline points="1239.04,461 1254.05,467" fill="none" stroke="#000" stroke-width="0.9" stroke-linejoin="round" /><polyline points="1246.43,482 1261.68,488" fill="none" stroke="#000" stroke-width="0.9" stroke-linejoin="round" /><polyline points="1148.5,239 1239,495.6" fill="none" stroke="#000" stroke-width="0.9" stroke-linejoin="round" /><polyline points="1158,233.5 1250,495" fill="none" stroke="#000" stroke-width="0.9" stroke-linejoin="round" /><polygon points="1226,497 1239,496.2 1239,928 1226,930" fill="#888" stroke="none" stroke-width="1" stroke-linejoin="round" /><polygon points="1240,496.2 1250,495.6 1250,927 1240,928" fill="#707070" stroke="none" stroke-width="1" stroke-linejoin="round" /><polygon points="1251,495.6 1264.5,495 1264.5,925 1251,927" fill="#7a444a" stroke="none" stroke-width="1" stroke-linejoin="round" /><polyline points="1222,494 1269,492.5" fill="none" stroke="#000" stroke-width="2" stroke-linejoin="round" /><polyline points="1226,572.5 1265,567.5" fill="none" stroke="#000" stroke-width="2.5" stroke-linejoin="round" /><polyline points="1223.5,497 1223.5,932" fill="none" stroke="#000" stroke-width="4" stroke-linejoin="round" /><polyline points="1238.5,508 1227,520 1238.5,532" fill="none" stroke="#000" stroke-width="0.8" stroke-linejoin="round" /><polyline points="1238.5,588 1227,600 1238.5,612" fill="none" stroke="#000" stroke-width="0.8" stroke-linejoin="round" /><polyline points="1238.5,658 1227,670 1238.5,682" fill="none" stroke="#000" stroke-width="0.8" stroke-linejoin="round" /><polyline points="1238.5,728 1227,740 1238.5,752" fill="none" stroke="#000" stroke-width="0.8" stroke-linejoin="round" /><polyline points="1238.5,798 1227,810 1238.5,822" fill="none" stroke="#000" stroke-width="0.8" stroke-linejoin="round" /><polyline points="1238.5,868 1227,880 1238.5,892" fill="none" stroke="#000" stroke-width="0.8" stroke-linejoin="round" /><polyline points="1251,500 1264.5,509" fill="none" stroke="#000" stroke-width="0.8" stroke-linejoin="round" /><polyline points="1251,527 1264.5,536" fill="none" stroke="#000" stroke-width="0.8" stroke-linejoin="round" /><polyline points="1251,554 1264.5,563" fill="none" stroke="#000" stroke-width="0.8" stroke-linejoin="round" /><polyline points="1251,581 1264.5,590" fill="none" stroke="#000" stroke-width="0.8" stroke-linejoin="round" /><polyline points="1251,608 1264.5,617" fill="none" stroke="#000" stroke-width="0.8" stroke-linejoin="round" /><polyline points="1251,635 1264.5,644" fill="none" stroke="#000" stroke-width="0.8" stroke-linejoin="round" /><polyline points="1251,662 1264.5,671" fill="none" stroke="#000" stroke-width="0.8" stroke-linejoin="round" /><polyline points="1251,689 1264.5,698" fill="none" stroke="#000" stroke-width="0.8" stroke-linejoin="round" /><polyline points="1251,716 1264.5,725" fill="none" stroke="#000" stroke-width="0.8" stroke-linejoin="round" /><polyline points="1251,743 1264.5,752" fill="none" stroke="#000" stroke-width="0.8" stroke-linejoin="round" /><polyline points="1251,770 1264.5,779" fill="none" stroke="#000" stroke-width="0.8" stroke-linejoin="round" /><polyline points="1251,797 1264.5,806" fill="none" stroke="#000" stroke-width="0.8" stroke-linejoin="round" /><polyline points="1251,824 1264.5,833" fill="none" stroke="#000" stroke-width="0.8" stroke-linejoin="round" /><polyline points="1251,851 1264.5,860" fill="none" stroke="#000" stroke-width="0.8" stroke-linejoin="round" /><polyline points="1251,878 1264.5,887" fill="none" stroke="#000" stroke-width="0.8" stroke-linejoin="round" /><polyline points="1251,905 1264.5,914" fill="none" stroke="#000" stroke-width="0.8" stroke-linejoin="round" /><polyline points="1174.5,228 1174.5,590 1222,790" fill="none" stroke="#000" stroke-width="0.9" stroke-linejoin="round" /><polygon points="975,402.5 1133,386 1154,441 1081,450.5 1000,460" fill="#fbd88f" stroke="none" stroke-width="1" stroke-linejoin="round" /><polygon points="1081,451 1154,442 1156,465.5 1090,474" fill="#5c5c5c" stroke="none" stroke-width="1" stroke-linejoin="round" /><polyline points="1081,451 1154,442" fill="none" stroke="#c9a86e" stroke-width="2" stroke-linejoin="round" /><polygon points="1089,473.5 1154,466 1159,486 1096,493" fill="#fbd88f" stroke="none" stroke-width="1" stroke-linejoin="round" /><polygon points="1096,493 1159,486 1172,600 1060,600" fill="#5c5c5c" stroke="none" stroke-width="1" stroke-linejoin="round" /><polygon points="1133,386 1137,384 1160,440 1154,441" fill="#8a8a8a" stroke="none" stroke-width="1" stroke-linejoin="round" /><polygon points="1154,441 1160,440 1217,868 1211,870" fill="#a2a2a2" stroke="#000" stroke-width="0.5" stroke-linejoin="round" /><polygon points="1055,594 1173,588 1212,870 1111,881 1102,882" fill="#595959" stroke="none" stroke-width="1" stroke-linejoin="round" /><polygon points="1055,594 1066,593.5 1111,881 1102,882" fill="#4a4a4a" stroke="#000" stroke-width="0.6" stroke-linejoin="round" /><polygon points="1066,593.5 1074,593 1113,860 1111,881" fill="#9a9a9a" stroke="#000" stroke-width="0.5" stroke-linejoin="round" /><polygon points="1076,611 1172,601 1177.5,621 1080,632.5" fill="#fbd88f" stroke="none" stroke-width="1" stroke-linejoin="round" /><polygon points="1080,632.5 1177.5,621 1177.8,623.5 1080.3,635" fill="#c9a86e" stroke="none" stroke-width="1" stroke-linejoin="round" /><polyline points="1080.3,635.3 1177.8,623.8" fill="none" stroke="#000" stroke-width="0.7" stroke-linejoin="round" /><polygon points="1082.5,656 1178.1,646 1183.6,666 1086.5,677.5" fill="#fbd88f" stroke="none" stroke-width="1" stroke-linejoin="round" /><polygon points="1086.5,677.5 1183.6,666 1183.9,668.5 1086.8,680" fill="#c9a86e" stroke="none" stroke-width="1" stroke-linejoin="round" /><polyline points="1086.8,680.3 1183.9,668.8" fill="none" stroke="#000" stroke-width="0.7" stroke-linejoin="round" /><polygon points="1089,701 1184.2,691 1189.7,711 1093,722.5" fill="#fbd88f" stroke="none" stroke-width="1" stroke-linejoin="round" /><polygon points="1093,722.5 1189.7,711 1190,713.5 1093.3,725" fill="#c9a86e" stroke="none" stroke-width="1" stroke-linejoin="round" /><polyline points="1093.3,725.3 1190,713.8" fill="none" stroke="#000" stroke-width="0.7" stroke-linejoin="round" /><polygon points="1095.5,746 1190.3,736 1195.8,756 1099.5,767.5" fill="#fbd88f" stroke="none" stroke-width="1" stroke-linejoin="round" /><polygon points="1099.5,767.5 1195.8,756 1196.1,758.5 1099.8,770" fill="#c9a86e" stroke="none" stroke-width="1" stroke-linejoin="round" /><polyline points="1099.8,770.3 1196.1,758.8" fill="none" stroke="#000" stroke-width="0.7" stroke-linejoin="round" /><polygon points="1102,791 1196.4,781 1201.9,801 1106,812.5" fill="#fbd88f" stroke="none" stroke-width="1" stroke-linejoin="round" /><polygon points="1106,812.5 1201.9,801 1202.2,803.5 1106.3,815" fill="#c9a86e" stroke="none" stroke-width="1" stroke-linejoin="round" /><polyline points="1106.3,815.3 1202.2,803.8" fill="none" stroke="#000" stroke-width="0.7" stroke-linejoin="round" /><polygon points="1108.5,836 1202.5,826 1208,846 1112.5,857.5" fill="#fbd88f" stroke="none" stroke-width="1" stroke-linejoin="round" /><polygon points="1112.5,857.5 1208,846 1208.3,848.5 1112.8,860" fill="#c9a86e" stroke="none" stroke-width="1" stroke-linejoin="round" /><polyline points="1112.8,860.3 1208.3,848.8" fill="none" stroke="#000" stroke-width="0.7" stroke-linejoin="round" /><polygon points="1111,858 1115,857.5 1115,880.5 1111,881" fill="#777" stroke="#000" stroke-width="0.5" stroke-linejoin="round" /><polygon points="907,275.5 929,272.5 986,428 960,432" fill="#000" stroke="none" stroke-width="1" stroke-linejoin="round" /><polygon points="911,277 925,275 979.5,429 964,431" fill="#ffe2a6" stroke="none" stroke-width="1" stroke-linejoin="round" /><polygon points="872,323.5 872.5,352.5 901,435 935,530 963,601 962.5,569 947.5,530 910,435" fill="rgba(70,90,140,0.75)" stroke="none" stroke-width="1" stroke-linejoin="round" /><polygon points="872,323.5 907,320.5 949,435 985,530 998,566 963,570 947.5,530 910,435" fill="rgba(138,186,238,0.90)" stroke="none" stroke-width="1" stroke-linejoin="round" /><polygon points="978.5,417 1065,407 1096,492.5 1202.5,483 1225.5,545 963.5,570.5 985,500" fill="rgba(128,178,234,0.80)" stroke="none" stroke-width="1" stroke-linejoin="round" /><polygon points="978.5,417 1065,407 1065.5,410 979,420" fill="rgba(190,220,245,0.7)" stroke="none" stroke-width="1" stroke-linejoin="round" /><polygon points="984,444 1043,438 1045,456 988,462" fill="rgba(150,195,240,0.55)" stroke="none" stroke-width="1" stroke-linejoin="round" /><polygon points="986,462 1043,456.5 1050,482 1053,560 1000,565 996,490" fill="rgba(160,205,245,0.55)" stroke="none" stroke-width="1" stroke-linejoin="round" /><polygon points="1044,451 1052,450 1068,560 1056,561" fill="rgba(90,140,200,0.45)" stroke="none" stroke-width="1" stroke-linejoin="round" /><polygon points="1056,474 1092,470 1100,495 1160,490 1166,530 1070,540" fill="rgba(175,212,240,0.55)" stroke="none" stroke-width="1" stroke-linejoin="round" /><polygon points="1060,497 1100,493 1165,488 1168,505 1063,515" fill="rgba(100,150,210,0.35)" stroke="none" stroke-width="1" stroke-linejoin="round" /><polygon points="963.5,570.5 1225.5,545 1225.5,572.5 963.5,600.5" fill="rgba(100,118,174,0.85)" stroke="none" stroke-width="1" stroke-linejoin="round" /><polygon points="1048,562.5 1062,561 1066,590.5 1052,592" fill="rgba(40,60,130,0.5)" stroke="none" stroke-width="1" stroke-linejoin="round" /><polygon points="1066,561 1225.5,545.5 1225.5,572.5 1069,590" fill="rgba(120,125,150,0.35)" stroke="none" stroke-width="1" stroke-linejoin="round" /><polyline points="872,323.5 910,435 947.5,530 963,570" fill="none" stroke="#1243d6" stroke-width="4" stroke-linejoin="round" /><polyline points="872.5,352.5 901,435 935,530 963,601" fill="none" stroke="#1243d6" stroke-width="3.2" stroke-linejoin="round" /><polyline points="872.3,323.5 872.3,352.5" fill="none" stroke="#1243d6" stroke-width="2.5" stroke-linejoin="round" /><polyline points="963.5,571 1225.5,545.5" fill="none" stroke="#1243d6" stroke-width="4.2" stroke-linejoin="round" /><polyline points="963.5,600.5 1225.5,573" fill="none" stroke="#1243d6" stroke-width="3.4" stroke-linejoin="round" /><polyline points="963.5,570 963.5,601" fill="none" stroke="#1243d6" stroke-width="1.5" stroke-linejoin="round" /><polyline points="1225.5,545 1225.5,573" fill="none" stroke="#1243d6" stroke-width="1.5" stroke-linejoin="round" /><polyline points="872,323.5 907,320.5" fill="none" stroke="#2a60e0" stroke-width="1" stroke-linejoin="round" /><polyline points="978.5,417 1065,407 1096,492.5 1202.5,483 1225.5,545" fill="none" stroke="#2a60e0" stroke-width="1" stroke-linejoin="round" /><polyline points="876,280 930,435 964,527.5 1100,513 1221,501" fill="none" stroke="#000" stroke-width="1" stroke-linejoin="round" /><polyline points="963,527.5 963,570" fill="none" stroke="#000" stroke-width="1" stroke-linejoin="round" /><polyline points="907,320.5 949,435 967.5,481 996,562" fill="none" stroke="#000" stroke-width="1" stroke-linejoin="round" /><polygon points="960,431 985,428.5 985,462 990.5,478 990.5,496 986,497 986,545 981.5,545 965,481 960,477" fill="#000" stroke="none" stroke-width="1" stroke-linejoin="round" /><polygon points="961.5,433 966,433 966,476 961.5,474" fill="#6b4f2d" stroke="none" stroke-width="1" stroke-linejoin="round" /><polygon points="967,440 981,480 984,542 982.5,542 966.5,479" fill="#7a5c36" stroke="none" stroke-width="1" stroke-linejoin="round" /><polygon points="976,432.5 983.5,431.5 983.5,461 976,441" fill="#a08050" stroke="none" stroke-width="1" stroke-linejoin="round" /><polyline points="968.5,437 988,491" fill="none" stroke="#ffcf8a" stroke-width="2.2" stroke-linejoin="round" /><polygon points="984,494 990,490 1003.5,489.5 1007,493 1015,519 1015,566 995.5,568 995.5,525" fill="#000" stroke="none" stroke-width="1" stroke-linejoin="round" /><polygon points="989.5,496.5 1002,495.5 1010.5,518.5 998,521.5" fill="#ffe2a6" stroke="none" stroke-width="1" stroke-linejoin="round" /><polygon points="999,524.5 1011.5,523 1011.5,565.5 999,567" fill="#a08858" stroke="none" stroke-width="1" stroke-linejoin="round" /><polygon points="987.5,500 995.5,525 995.5,562 989,545 987.5,540" fill="#777" stroke="none" stroke-width="1" stroke-linejoin="round" /></svg>
<svg class="r" style="left:0;top:0" width="1920" height="1080" viewBox="0 0 1920 1080"><defs>
<linearGradient id="gApp" x1="0" y1="0" x2="0" y2="1"><stop offset="0" stop-color="#ececec"/><stop offset="0.45" stop-color="#b9b9b9"/><stop offset="1" stop-color="#838383"/></linearGradient>
<linearGradient id="gBox" x1="0" y1="0" x2="0" y2="1"><stop offset="0" stop-color="#f4f4f4"/><stop offset="1" stop-color="#cfcfcf"/></linearGradient>
<linearGradient id="gBlu" x1="0" y1="0" x2="0" y2="1"><stop offset="0" stop-color="#d4e8f6"/><stop offset="1" stop-color="#8dbfe4"/></linearGradient>
<linearGradient id="gBlu2" x1="0" y1="0" x2="0" y2="1"><stop offset="0" stop-color="#6aa0d0"/><stop offset="1" stop-color="#2c5f96"/></linearGradient>
<linearGradient id="gPen" x1="0" y1="0" x2="1" y2="1"><stop offset="0" stop-color="#ffe36a"/><stop offset="1" stop-color="#e8a420"/></linearGradient>
</defs><rect x="0" y="0" width="41" height="41" fill="#000"/><rect x="1.5" y="1.5" width="38" height="38" fill="url(#gApp)"/><path d="M9.4 7.6L15.6 3.9 22.1 11.6 21.5 14.6 12.6 18.3 27.2 26.3 25.4 29.2 13.4 21.6 11 29.6 5.9 28.6Z" fill="#173da0"/><path d="M9.4 7.6L15.6 3.9 22.1 11.6 21.5 14.6 12.6 18.3 8 19.5Z" fill="#0c2a82"/><path d="M31 17.75h7l-3.5 4.5z" fill="#333"/><path d="M1347.5 7.5v9l4-4.5z" fill="#333"/><g fill="#fff" stroke="#222" stroke-width="1.1"><rect x="1538.5" y="10.5" width="5" height="8" rx="1"/><rect x="1546.5" y="10.5" width="5" height="8" rx="1"/><path d="M1539.5 10.5l1-5h3l0.5 5M1546.5 10.5l0.5-5h3l1 5M1543.5 9.5h3"/></g><g fill="#fff" stroke="#222" stroke-width="1.1"><path d="M1564.5 6.5q-1 7 7 8.500z"/><path d="M1568 10.500l5-5M1566.500 18.500h8l-3-4.500h-2z"/></g><path d="M1593.5 4.5l2.300 5.500 5.700 0.300-4.400 3.700 1.500 5.700-5.100-3.200-5.100 3.200 1.500-5.700-4.400-3.700 5.700-0.300z" fill="#fff" stroke="#222" stroke-width="1.1"/><g fill="#fff" stroke="#222" stroke-width="1.1"><path d="M1610.500 18.500q0.500-4 4.500-4.500 1.500 2 3 2t3-2q4 0.500 4.500 4.500z"/><ellipse cx="1618" cy="9.500" rx="3.800" ry="5"/></g><path d="M1715 10.75h6l-3 3.5z" fill="#333"/><path d="M1731 5h5l3 4.500 3-4.500h5q-5 3-5.500 7 0.500 4 5.500 7h-5l-3-4.500-3 4.500h-5q5-3 5.500-7-0.500-4-5.500-7z" fill="#3a56a8" stroke="#1c2f70" stroke-width="0.6"/><path d="M1755.500 3v18" stroke="#cfcfcf"/><circle cx="1772.500" cy="12" r="7.300" fill="#fff" stroke="#222" stroke-width="1.2"/><text x="1772.5" y="16.4" font-family="Liberation Sans" font-weight="bold" font-size="12.500" text-anchor="middle" fill="#1f3f9a">?</text><path d="M1787 10.75h6l-3 3.5z" fill="#333"/><path d="M1826 10.500h9v2h-9z" fill="#1a1a1a"/><path d="M1852.500 7.500h8v7h-8zM1854.500 7.500v-2h8v7h-2" fill="none" stroke="#1a1a1a" stroke-width="1.2"/><path d="M1891 5.500l7.500 7.500M1898.500 5.500l-7.500 7.500" stroke="#fff" stroke-width="2"/><rect x="910.5" y="30.500" width="14" height="8" rx="2" fill="#fff" stroke="#222" stroke-width="1.1"/><path d="M914.500 36.500h6l-3-3.500z" fill="#222"/><path d="M928.5 33.25h6l-3 3.5z" fill="#222"/><path d="M24.500 55.500v15.500l3.600-3.200 2.700 6.200 2.600-1.100-2.700-6.100h5z" fill="#fff" stroke="#222" stroke-width="1.100" stroke-linejoin="round"/><path d="M75.5 54.7h9.8v9.8h-9.8z" fill="#e8e8e8" stroke="#2b2b2b" stroke-width="1" stroke-linejoin="round"/><path d="M75.5 54.7l4.2 -4.2h9.8l-4.2 4.2z" fill="#fafafa" stroke="#2b2b2b" stroke-width="1" stroke-linejoin="round"/><path d="M85.3 54.7l4.2 -4.2v9.8l-4.2 4.2z" fill="#cfcfcf" stroke="#2b2b2b" stroke-width="1" stroke-linejoin="round"/><path d="M87.5 54.7h9.8v9.8h-9.8z" fill="#e8e8e8" stroke="#2b2b2b" stroke-width="1" stroke-linejoin="round"/><path d="M87.5 54.7l4.2 -4.2h9.8l-4.2 4.2z" fill="#fafafa" stroke="#2b2b2b" stroke-width="1" stroke-linejoin="round"/><path d="M97.3 54.7l4.2 -4.2v9.8l-4.2 4.2z" fill="#cfcfcf" stroke="#2b2b2b" stroke-width="1" stroke-linejoin="round"/><path d="M75.5 67.7h9.8v9.8h-9.8z" fill="#e8e8e8" stroke="#2b2b2b" stroke-width="1" stroke-linejoin="round"/><path d="M75.5 67.7l4.2 -4.2h9.8l-4.2 4.2z" fill="#fafafa" stroke="#2b2b2b" stroke-width="1" stroke-linejoin="round"/><path d="M85.3 67.7l4.2 -4.2v9.8l-4.2 4.2z" fill="#cfcfcf" stroke="#2b2b2b" stroke-width="1" stroke-linejoin="round"/><path d="M87.5 67.1h8.4v8.4h-8.4z" fill="#e8e8e8" stroke="#2b2b2b" stroke-width="1" stroke-linejoin="round"/><path d="M87.5 67.1l3.5999999999999996 -3.5999999999999996h8.4l-3.5999999999999996 3.5999999999999996z" fill="#fafafa" stroke="#2b2b2b" stroke-width="1" stroke-linejoin="round"/><path d="M95.9 67.1l3.5999999999999996 -3.5999999999999996v8.4l-3.5999999999999996 3.5999999999999996z" fill="#cfcfcf" stroke="#2b2b2b" stroke-width="1" stroke-linejoin="round"/><rect x="91.500" y="62" width="12" height="16.500" rx="1" fill="#fdfdfd" stroke="#222" stroke-width="1.1"/><rect x="93.500" y="64" width="5" height="5" fill="url(#gBlu2)"/><rect x="99.5" y="64" width="2" height="5" fill="#b5b5b5"/><path d="M94 72h7M94 75.500h7M96 71v2M99 74.500v2" stroke="#333" stroke-width="1"/><rect x="78.500" y="86.500" width="20" height="28" rx="1" fill="#fbfbfb" stroke="#222" stroke-width="1.1"/><rect x="81.500" y="89" width="10" height="10" fill="url(#gBlu2)"/><rect x="93" y="89" width="3" height="10" fill="#b9b9b9"/><path d="M82 104h13M82 110h13M85 102v4M92 108v4" stroke="#333" stroke-width="1.400"/><g fill="#eeeeee" stroke="#c9c9c9" stroke-width="1.1"><rect x="137.500" y="53.500" width="21" height="23" rx="1.500"/><rect x="143" y="50.500" width="10" height="5" rx="1.500"/><path d="M145.500 59.500h11l5 5v15h-16z" fill="#f6f6f6"/></g><path d="M146 102.75h6l-3 3.5z" fill="#b0b0b0"/><g stroke="#222" stroke-width="1.300" fill="none"><path d="M181 52l10.500 11M193 52l-10.500 11"/><circle cx="182" cy="64" r="1.800" fill="#fff"/><circle cx="192" cy="64" r="1.800" fill="#fff"/></g><g fill="#fbfbfb" stroke="#222" stroke-width="1.100"><path d="M179.500 75.500h7l3 3v9h-10z"/><path d="M184.500 79.500h6.500l3.500 3.500v8h-10z"/></g><rect x="179.500" y="99.500" width="7" height="8" fill="#fff" stroke="#222"/><rect x="181" y="101" width="4" height="2.500" fill="#4a78b0"/><path d="M194.500 100.500l-6 7.500" stroke="#b08a50" stroke-width="2"/><path d="M188.500 108q-2 1-3 5.500 5 0 6.500-4z" fill="#555" stroke="#222" stroke-width="0.800"/><g stroke="#333" stroke-width="1.200" fill="#e4e4e4"><path d="M209.500 51.500h6v2h-2v10.500h2v2h-6v-2h2v-10.500h-2z"/><path d="M225 52h-3.500v4h-2.500v6h2.500v4h3.500" fill="none"/></g><path d="M214.500 59h6M216.500 57l-2 2 2 2" stroke="#000" stroke-width="1.100" fill="none"/><path d="M270.2 57.5h7l-3.5 4z" fill="#3a3a3a"/><path d="M255.9 81.5h7l-3.5 4z" fill="#3a3a3a"/><path d="M257.8 105.5h7l-3.5 4z" fill="#3a3a3a"/><rect x="214.500" y="75.500" width="10" height="10" fill="url(#gBlu)" stroke="#2f6fa8"/><circle cx="214.500" cy="85.500" r="5" fill="#fff" stroke="#222" stroke-width="1.100"/><path d="M214.500 80.500a5 5 0 0 1 5 5" stroke="#d02020" stroke-width="1.300" fill="none"/><rect x="214.500" y="99.500" width="10" height="10" fill="url(#gBlu)" stroke="#2f6fa8"/><circle cx="214.500" cy="109" r="5.300" fill="#9cc6e8" fill-opacity="0.9" stroke="#2f6fa8" stroke-width="1.100"/><path d="M285.500 51.500h6l2 3v9l-2 3h-6z" fill="url(#gBox)" stroke="#333" stroke-width="1.100"/><path d="M301 56.500h-6v-2.500l-4 4.500 4 4.500v-2.500h6z" fill="#cfcfcf" stroke="#333" stroke-width="1"/><path d="M293 56l-2.500 2.500 2.500 2.500" stroke="#2f7fc0" fill="none" stroke-width="1.200"/><path d="M311.500 52l3-1 10.500 4.500v10l-3 1-10.500-4.500z" fill="url(#gBox)" stroke="#333" stroke-width="1.100"/><path d="M314.500 56.500l6 2.500v5l-6-2.500z" fill="#8ec0ea" stroke="#2f6fa8" stroke-width="1.100"/><path d="M286.500 76v4M285 78.500l1.500 2 1.500-2" stroke="#2f7fc0" fill="none" stroke-width="1.100"/><path d="M290.500 76v5h2v-3h2v3h2v-5" stroke="#333" fill="none" stroke-width="1"/><path d="M290 83h11M290 87h11" stroke="#333" stroke-width="1.200"/><path d="M290 85h11" stroke="#333" stroke-dasharray="2 1" stroke-width="1"/><path d="M289 89.500h5M292.500 88l1.500 1.500-1.500 1.500" stroke="#2f7fc0" fill="none" stroke-width="1.100"/><circle cx="314" cy="79" r="3.600" fill="#fff" stroke="#333" stroke-width="1.100"/><path d="M311.500 76.500l5 5M316.500 76.500l-5 5" stroke="#333" stroke-width="1"/><path d="M311 84v4h3M312.800 86.500l1.700 1.500-1.700 1.500" stroke="#000" fill="none" stroke-width="1.200"/><path d="M317.5 85.05h5.95v5.95h-5.95z" fill="#e8e8e8" stroke="#2b2b2b" stroke-width="1" stroke-linejoin="round"/><path d="M317.5 85.05l2.55 -2.55h5.95l-2.55 2.55z" fill="#fafafa" stroke="#2b2b2b" stroke-width="1" stroke-linejoin="round"/><path d="M323.45 85.05l2.55 -2.55v5.95l-2.55 2.55z" fill="#cfcfcf" stroke="#2b2b2b" stroke-width="1" stroke-linejoin="round"/><path d="M332.1 81.5h7l-3.5 4z" fill="#3a3a3a"/><path d="M286 99v15.500h15.500M288.500 99v13h13M291 99v10.500h10.500" stroke="#2f7fc0" stroke-width="1.200" fill="none"/><path d="M296 111.500h5.500M296 114h5.500" stroke="#777" stroke-width="1"/><path d="M299.500 99.500l2 2-7.500 7-2.500 0.800 0.800-2.600z" fill="url(#gPen)" stroke="#6a4a10" stroke-width="0.800"/><path d="M317 108l7.500 8" stroke="#c08c78" stroke-width="2.600"/><path d="M317 108l7.500 8" stroke="#7a4a3a" stroke-width="0.600" fill="none"/><path d="M311 104l5.500-5 3 1.500 2.500 3-3.500 3.500-1.500-1.500-3 2.500z" fill="#666" stroke="#222" stroke-width="1"/><path d="M354 49v30.500" stroke="#222" stroke-width="1.500"/><rect x="356.500" y="52.500" width="10.500" height="9.500" fill="url(#gBlu)" stroke="#2f7fc0" stroke-width="1.100"/><rect x="356.500" y="65.500" width="24.500" height="11.500" fill="url(#gBox)" stroke="#333" stroke-width="1.100"/><path d="M422 63.500h-10.500v-6q0-5-6.300-5t-6.200 5v6h-1.500q-4.500 0-4.500 5.700t4.500 5.800h24.500" stroke="#2f7fc0" stroke-width="1.300" fill="none"/><path d="M422 66.500h-13.500v-8.500q0-2.500-3.300-2.500t-3.200 2.500v8.500h-4q-2 0-2 2.700t2 2.800h24" stroke="#333" stroke-width="1.200" fill="#fff"/><path d="M432.5 53.5h3.500l5 5v10.500h-3.500v7.500h-5z" fill="url(#gBox)" stroke="#333" stroke-width="1.100" stroke-linejoin="round"/><path d="M445.500 49v29.500" stroke="#49a83a" stroke-width="1.600"/><path d="M458.5 53.5h-3l-5.500 5v18h3.500l5-6z" fill="#cfe3f1" stroke="#9cc3de" stroke-width="1" stroke-linejoin="round"/><path d="M445.500 63v13l3-2.700 2.200 5 2.200-1-2.200-4.900h4z" fill="#fff" stroke="#222" stroke-width="1" stroke-linejoin="round"/><path d="M471.5 53.5h3.500l5 5v10.500h-3.500v7.500h-5z" fill="url(#gBox)" stroke="#333" stroke-width="1.100" stroke-linejoin="round"/><path d="M484.500 49v27" stroke="#2f7fc0" stroke-width="1.600"/><path d="M497.5 53.5h-3l-5.500 5v18h3.500l5-6z" fill="#cfe3f1" stroke="#9cc3de" stroke-width="1" stroke-linejoin="round"/><path d="M496 64l3 3-12 10.500-3.800 1.300 1.200-3.800z" fill="url(#gPen)" stroke="#6a4a10" stroke-width="0.900"/><path d="M496 64l3 3 1.500-1.500-3-3z" fill="#b06a30"/><path d="M368 85.500l6 7h-4v5.500h-4v-5.500h-4zM368 115l6-7h-4v-5.500h-4v5.500h-4zM353.500 100l7-6v4h5v4h-5v4zM382.500 100l-7-6v4h-5v4h5v4z" fill="#3a3f46"/><rect x="365.500" y="97.500" width="5" height="5" fill="#fff" stroke="#3a3f46" stroke-width="1.200"/><circle cx="399" cy="92" r="5.500" fill="url(#gBox)" stroke="#333" stroke-width="1.100"/><path d="M407.500 90h5q4 0 4 4.500" stroke="#111" stroke-width="1.500" fill="none"/><path d="M413.500 94h6l-3 3.500z" fill="#111"/><circle cx="414" cy="107.500" r="5.500" fill="#b9d9f0" stroke="#2f7fc0" stroke-width="1.100"/><circle cx="410.500" cy="104.500" r="5.500" fill="url(#gBlu)" stroke="#2f7fc0" stroke-width="1.100"/><path d="M441 90.500a12 12 0 1 0 11.500 0.500" stroke="#3a3f46" stroke-width="2.600" fill="none"/><path d="M441 86.500l9.500 3.500-8 5.500z" fill="#3a3f46"/><path d="M476 89h13M487 87l2.500 2-2.500 2" stroke="#111" stroke-width="1.100" fill="none"/><path d="M470.500 93.500h13M470.500 96h13" stroke="#333" stroke-width="1.100"/><path d="M483.500 92.500h11v6.500h-4v-2.500h-7z" fill="#6db3e8" stroke="#2f7fc0" stroke-width="0.800"/><path d="M490.500 99v7.500h4v-7.500" fill="#6db3e8" stroke="#2f7fc0" stroke-width="0.800"/><path d="M490.500 106.500v8.500M494.500 106.500v8.500" stroke="#333" stroke-width="1.100"/><path d="M498.500 108v-12M496.500 98.500l2-2.500 2 2.500" stroke="#111" stroke-width="1.100" fill="none"/><rect x="511.500" y="57.500" width="14" height="4" fill="#9fd0f4" stroke="#2f7fc0" stroke-width="1.100"/><path d="M518.500 54v11" stroke="#d02020" stroke-dasharray="1.500 1" stroke-width="1.300"/><g stroke="#2f7fc0" stroke-width="1.200"><rect x="511.500" y="76" width="5.500" height="5.500" fill="#fff" stroke="#333"/><rect x="520.500" y="76" width="5.500" height="5.500" fill="#cfe6f7"/><rect x="511.500" y="85" width="5.500" height="5.500" fill="#cfe6f7"/><rect x="520.500" y="85" width="5.500" height="5.500" fill="#cfe6f7"/></g><path d="M514.500 101.500h6M519 99.500l2 2-2 2" stroke="#111" fill="none" stroke-width="1.100"/><path d="M511.500 106.500h8M511.500 109.500h8" stroke="#333" stroke-width="1.100"/><path d="M519 106h5v4h-5z" fill="#6db3e8"/><path d="M524.500 99.500v15M526.500 99.500v15" stroke="#333" stroke-width="1"/><rect x="536.500" y="57.500" width="4.500" height="4" fill="#9fd0f4" stroke="#2f7fc0" stroke-width="1.100"/><rect x="546" y="57.500" width="4.500" height="4" fill="#9fd0f4" stroke="#2f7fc0" stroke-width="1.100"/><path d="M543.500 54v11" stroke="#d02020" stroke-dasharray="1.500 1" stroke-width="1.300"/><rect x="536.500" y="76.500" width="15" height="14" fill="#f0f0f0" stroke="#d4d4d4"/><rect x="536.500" y="82.500" width="9" height="8" fill="#f7f7f7" stroke="#cfcfcf"/><path d="M539.500 101.500h6M544 99.500l2 2-2 2" stroke="#111" fill="none" stroke-width="1.100"/><path d="M536.500 105h8M536.500 108h8M536.500 111h8" stroke="#333" stroke-width="1.100"/><path d="M544 104.500h5v2h-5zM544 107.500h5v2h-5zM544 110.500h5v1.500h-5z" fill="#6db3e8"/><path d="M549.500 99.500v15M551.500 99.500v15" stroke="#333" stroke-width="1"/><g stroke="#d0d0d0" fill="none" stroke-width="1.100"><path d="M561.500 56.500h5M566.500 52.500v8l2.500-1.500h4l1.500 1.500v-8l-1.500 1.500h-4z"/><path d="M571 60.500l5 5M576 60.500l-5 5" stroke-width="1.500"/></g><g stroke="#333" fill="#fff" stroke-width="1.100"><path d="M561.500 83.500h6"/><path d="M567.500 79.500v8l2.500-1.500h4l1.500 1.500v-8l-1.500 1.500h-4z"/></g><path d="M564 102.500l10 10M574 102.500l-10 10" stroke="#b81818" stroke-width="3.600" stroke-linecap="round"/><path d="M564 102.500l10 10M574 102.500l-10 10" stroke="#f05a5a" stroke-width="2" stroke-linecap="round"/><path d="M594 59.500a5 5 0 1 1 8.500 0q-1.300 1.700-1.500 3.500h-5.500q-0.200-1.800-1.500-3.500z" fill="url(#gBlu)" stroke="#2f7fc0" stroke-width="1.100"/><rect x="596" y="63.500" width="4.500" height="2.800" fill="#555" stroke="#222" stroke-width="0.700"/><path d="M610.9 57.5h7l-3.5 4z" fill="#3a3a3a"/><path d="M610.9 81.5h7l-3.5 4z" fill="#3a3a3a"/><g stroke="#333" stroke-width="1" fill="#f4f4f4"><path d="M626.500 63.500v-4l3.500-4 4.500 2.500v5.500zM630 55.500l6-1.500 4.500 2.500-6 1zM634.500 58v5.500l6.500-2v-5z"/><path d="M629.500 59.500h5v4.500h-5z" fill="#ddd"/></g><path d="M638.500 50.500l1 2.500 2.500-1-1 2.500 2.500 1-2.500 1 1 2.500-2.500-1-1 2.500-1-2.500-2.500 1 1-2.500-2.500-1 2.500-1-1-2.500 2.500 1z" fill="#ffd24a" stroke="#e07010" stroke-width="0.700"/><path d="M606.500 76.500l-8 9" stroke="#c8875a" stroke-width="2.600" stroke-linecap="round"/><path d="M599.500 84q-3 0.500-4 3-1.500 2.500-4.500 2.500 5 1.500 8.500-0.500 2.500-1.500 2-3.500z" fill="#7a4a20" stroke="#4a2a10" stroke-width="0.600"/><path d="M626 77.500h16" stroke="#222" stroke-width="1"/><path d="M626 80.500h16" stroke="#222" stroke-width="2.200"/><path d="M626 84.500h9" stroke="#222" stroke-dasharray="2 1" stroke-width="1"/><path d="M636.500 83h4v3h2.500l-4.500 4.500-4.500-4.500h2.500z" fill="#2f86d8" stroke="#1a5fa8" stroke-width="0.600"/><g transform="translate(590.5 98.5) scale(1.0)" stroke-linejoin="round"><path d="M3 0.500l13 6.500v7.500l-13-6.500z" fill="#4f9fe0" stroke="#1a5fa8" stroke-width="1"/><path d="M0.500 2l2.500-1.500 13 6.500-2.500 1.500zM0.500 2v7.500l13 6.500v-7.500zM13.500 16l2.500-1.500v-7.500" fill="none" stroke="#222" stroke-width="1"/><path d="M4.500 5.500l7 3.500v3l-7-3.500z" fill="#9fd0f4" stroke="#1a5fa8" stroke-width="0.600"/></g><g opacity="0.55"><path d="M663.5 57.3h11.2v11.2h-11.2z" fill="#efefef" stroke="#cfcfcf" stroke-width="1" stroke-linejoin="round"/><path d="M663.5 57.3l4.8 -4.8h11.2l-4.8 4.8z" fill="#f7f7f7" stroke="#cfcfcf" stroke-width="1" stroke-linejoin="round"/><path d="M674.7 57.3l4.8 -4.8v11.2l-4.8 4.8z" fill="#e2e2e2" stroke="#cfcfcf" stroke-width="1" stroke-linejoin="round"/></g><rect x="656.500" y="71.500" width="28" height="4.500" fill="#e4e4e4" stroke="#d0d0d0"/><path d="M692.1 63h7l-3.5 4z" fill="#8a8a8a"/><path d="M692.1 99h7l-3.5 4z" fill="#8a8a8a"/><path d="M656.500 86v28M685.500 86v28M657 93.500h28M660 91.500l-3 2 3 2M682 91.500l3 2-3 2" stroke="#c8c8c8" stroke-width="1.100" fill="none"/><path d="M716 50.500h-3.500v28h3.500M738 50.500h3.500v28h-3.500" stroke="#333" stroke-width="1.200" fill="none"/><path d="M716.5 57.1h8.4v8.4h-8.4z" fill="#8ec4ea" stroke="#2f6fa8" stroke-width="1" stroke-linejoin="round"/><path d="M716.5 57.1l3.5999999999999996 -3.5999999999999996h8.4l-3.5999999999999996 3.5999999999999996z" fill="#cfe6f7" stroke="#2f6fa8" stroke-width="1" stroke-linejoin="round"/><path d="M724.9 57.1l3.5999999999999996 -3.5999999999999996v8.4l-3.5999999999999996 3.5999999999999996z" fill="#5fa0d4" stroke="#2f6fa8" stroke-width="1" stroke-linejoin="round"/><path d="M716.5 68.1h8.4v8.4h-8.4z" fill="#e8e8e8" stroke="#2b2b2b" stroke-width="1" stroke-linejoin="round"/><path d="M716.5 68.1l3.5999999999999996 -3.5999999999999996h8.4l-3.5999999999999996 3.5999999999999996z" fill="#fafafa" stroke="#2b2b2b" stroke-width="1" stroke-linejoin="round"/><path d="M724.9 68.1l3.5999999999999996 -3.5999999999999996v8.4l-3.5999999999999996 3.5999999999999996z" fill="#cfcfcf" stroke="#2b2b2b" stroke-width="1" stroke-linejoin="round"/><path d="M726.5 66.7h9.8v9.8h-9.8z" fill="#e8e8e8" stroke="#2b2b2b" stroke-width="1" stroke-linejoin="round"/><path d="M726.5 66.7l4.2 -4.2h9.8l-4.2 4.2z" fill="#fafafa" stroke="#2b2b2b" stroke-width="1" stroke-linejoin="round"/><path d="M736.3 66.7l4.2 -4.2v9.8l-4.2 4.2z" fill="#cfcfcf" stroke="#2b2b2b" stroke-width="1" stroke-linejoin="round"/><path d="M754.500 49.500h-3.500v28.500h3.500M776 56v22h-3.500" stroke="#333" stroke-width="1.200" fill="none"/><circle cx="760.500" cy="60.500" r="6" fill="url(#gBox)" stroke="#333" stroke-width="1.100"/><path d="M761.5 64.7h9.8v9.8h-9.8z" fill="#e8e8e8" stroke="#2b2b2b" stroke-width="1" stroke-linejoin="round"/><path d="M761.5 64.7l4.2 -4.2h9.8l-4.2 4.2z" fill="#fafafa" stroke="#2b2b2b" stroke-width="1" stroke-linejoin="round"/><path d="M771.3 64.7l4.2 -4.2v9.8l-4.2 4.2z" fill="#cfcfcf" stroke="#2b2b2b" stroke-width="1" stroke-linejoin="round"/><path d="M774 48.500l1.300 3.300 3.200-1.500-1.500 3.200 3.300 1.300-3.300 1.300 1.500 3.200-3.200-1.500-1.300 3.300-1.300-3.300-3.200 1.500 1.500-3.200-3.300-1.300 3.300-1.300-1.500-3.200 3.200 1.500z" fill="#ffd24a" stroke="#e05a10" stroke-width="0.800"/><g stroke-linejoin="round" stroke-width="1.100"><path d="M719 86.500l3.500-1 20 7v14l-3.500 1z" fill="#f0f0f0" stroke="#333"/><path d="M716 90l3-1 20.500 7.500v14l-3 1z" fill="#7fbdf0" stroke="#2f6fa8"/><path d="M711.500 94.500l3.500-1.500 21.500 8.500v14l-3.500 1.500z" fill="#fafafa" stroke="#333"/><path d="M711.500 94.500l21.500 8.500v14l-21.500-8.500z" fill="#e2e2e2" stroke="#333"/></g><rect x="749.500" y="86.500" width="6.500" height="6" fill="#f4f4f4" stroke="#333"/><rect x="771.500" y="86" width="7" height="6.500" fill="#a9d2f0" stroke="#2f7fc0" stroke-width="1.100"/><rect x="749.500" y="107.500" width="11" height="6.500" fill="#a9d2f0" stroke="#2f7fc0" stroke-width="1.100"/><path d="M773.500 103l5 5-5 5-5-5z" fill="#a9d2f0" stroke="#2f7fc0" stroke-width="1.100"/><path d="M759 89.500h8M752.500 96v8M760 95.500l6 6" stroke="#000" stroke-width="1.300"/><path d="M765.500 87l3.500 2.500-3.500 2.500zM750 102.500h5l-2.500 3.500zM767.500 98.500v4.500h-4.500z" fill="#000"/><path d="M808.500 50.500h23v29h-17.500v-9h-5.500z" fill="url(#gBox)" stroke="#222" stroke-width="1.200" stroke-dasharray="2 1.300"/><path d="M831.500 66.500l2.600 2.600-12 10-3.800 1.200 1.200-3.800z" fill="url(#gPen)" stroke="#6a4a10" stroke-width="0.900"/><path d="M831.500 66.500l2.600 2.600 1.200-1.400-2.500-2.500z" fill="#b06a30"/><path d="M878.500 76l12-13.500 16.500 6 0.500 5-7 5.500h-21z" fill="url(#gBlu)" stroke="none"/><path d="M878.500 76l12-13.500 16.500 6M890.500 62.500l9.500 16.500" stroke="#2f7fc0" stroke-width="1.100" fill="none"/><path d="M878.500 76v2.500h28.500v-9.500" stroke="#7fb0d8" stroke-width="1" fill="none"/><path d="M890.500 52v6M888.500 54.500l2-2.500 2 2.500M890.500 67.500v7M888.500 72l2 2.500 2-2.500" stroke="#111" stroke-width="1.100" fill="none"/><rect x="888.500" y="60.500" width="4" height="4" fill="#fff" stroke="#c03020" stroke-width="1.100"/><path d="M936.500 63l9.500-10 6 4.500v5l-3 3.500h-12.500z" fill="url(#gBlu)" stroke="#222" stroke-width="1" stroke-linejoin="round"/><path d="M936.500 63h12.500l3-5.500" stroke="#222" stroke-width="0.900" fill="none"/><rect x="946" y="51" width="3" height="3" fill="#fff" stroke="#c03020" stroke-width="1"/><path d="M936.500 87.500l5-9.500h10.500l-0.500 5-4.500 7.500h-10.500z" fill="url(#gBlu)" stroke="#222" stroke-width="1" stroke-linejoin="round"/><path d="M936.500 87.500h10.500l5-9.500" stroke="#222" stroke-width="0.900" fill="none"/><path d="M942 78l8.500-1" stroke="#c03020" stroke-width="1.300"/><path d="M936.500 104l7-4.500 9 2.500v5l-6 4.500-10-3z" fill="url(#gBlu)" stroke="#2f6fa8" stroke-width="1" stroke-linejoin="round"/><path d="M937 105.500q5-4.500 8.500-1t7-1.500" stroke="#1a5fa8" stroke-width="1.200" fill="none"/><path d="M942 101.500l4.500-2.500" stroke="#c03020" stroke-width="1.200"/><path d="M938 111.500l3-2.500h7l-3 3.500v2.500h-7z" fill="#f0f0f0" stroke="#222" stroke-width="1"/><g stroke="#d4d4d4" fill="#f0f0f0" stroke-width="1.100" stroke-linejoin="round"><path d="M1051 72.500l10-6 18 4-9 7z"/><path d="M1051 72.500v4.500l19 5 9-7.500v-4"/><path d="M1052 72l9.500-17 8.500 22M1061.500 55l17 15.500" fill="none" stroke-dasharray="2 1.500"/><circle cx="1061.500" cy="54.500" r="1.800"/><path d="M1069.500 56.500q2-4.500 6-3.500t3.500 5.500" fill="none" stroke-width="2"/><path d="M1067.500 54l2 3.500 3.500-1.500" fill="none" stroke-width="1.500"/></g><path d="M9.500 156.500v-10h5l1.500 1.500h6v3" fill="#f0f0f0" stroke="#333" stroke-width="1.100"/><path d="M9.500 156.500l3.500-6h11.500l-3.500 6z" fill="#d9e3ee" stroke="#333" stroke-width="1.100" stroke-linejoin="round"/><rect x="34.500" y="144.500" width="13" height="13" rx="1" fill="#4a5262" stroke="#222" stroke-width="1"/><rect x="37" y="145.500" width="8" height="4.500" fill="#e8ecf2"/><rect x="38" y="152.500" width="6" height="4.500" fill="#f4f4f4"/><rect x="39" y="153.500" width="1.500" height="2.500" fill="#333"/><g opacity="0.5"><path d="M58.5 148.9h5.6v5.6h-5.6z" fill="#e8e8e8" stroke="#999" stroke-width="1" stroke-linejoin="round"/><path d="M58.5 148.9l2.4 -2.4h5.6l-2.4 2.4z" fill="#f6f6f6" stroke="#999" stroke-width="1" stroke-linejoin="round"/><path d="M64.1 148.9l2.4 -2.4v5.6l-2.4 2.4z" fill="#d0d0d0" stroke="#999" stroke-width="1" stroke-linejoin="round"/><path d="M63.5 147.9h5.6v5.6h-5.6z" fill="#e8e8e8" stroke="#999" stroke-width="1" stroke-linejoin="round"/><path d="M63.5 147.9l2.4 -2.4h5.6l-2.4 2.4z" fill="#f6f6f6" stroke="#999" stroke-width="1" stroke-linejoin="round"/><path d="M69.1 147.9l2.4 -2.4v5.6l-2.4 2.4z" fill="#d0d0d0" stroke="#999" stroke-width="1" stroke-linejoin="round"/><path d="M60.5 152.9h5.6v5.6h-5.6z" fill="#e8e8e8" stroke="#999" stroke-width="1" stroke-linejoin="round"/><path d="M60.5 152.9l2.4 -2.4h5.6l-2.4 2.4z" fill="#f6f6f6" stroke="#999" stroke-width="1" stroke-linejoin="round"/><path d="M66.1 152.9l2.4 -2.4v5.6l-2.4 2.4z" fill="#d0d0d0" stroke="#999" stroke-width="1" stroke-linejoin="round"/><circle cx="68.500" cy="155" r="3.500" fill="#bbb"/></g><path d="M79 150.75h6l-3 3.5z" fill="#333"/><path d="M115.5 149.75h6l-3 3.5z" fill="#333"/><path d="M151.5 149.75h6l-3 3.5z" fill="#333"/><path d="M194.5 150.75h6l-3 3.5z" fill="#333"/><path d="M94 150.500l6.500-5v3q7.500 0 7.500 8h-3.500q0-4-4-4v3z" fill="#fff" stroke="#222" stroke-width="1.100" stroke-linejoin="round"/><path d="M143 150.500l-6.500-5v3q-7.500 0-7.500 8h3.500q0-4 4-4v3z" fill="#f0f0f0" stroke="#aaa" stroke-width="1.100" stroke-linejoin="round"/><path d="M165.500 143v19M279.500 143v19M371.500 143v19" stroke="#bdbdbd"/><path d="M166.500 143v19M280.500 143v19M372.500 143v19" stroke="#f8f8f8"/><path d="M173 149.500h14M175.500 147.500l-2.500 2 2.500 2M184.500 147.500l2.500 2-2.500 2" stroke="#aaa" fill="none" stroke-width="1.100"/><rect x="172.500" y="153.500" width="14" height="3" fill="#ddd" stroke="#b4b4b4" stroke-width="0.800"/><path d="M209.500 158l12-12M208 154l5 5M217.500 144.500l5 5" stroke="#222" stroke-width="1.100"/><path d="M209.500 158l1-4 3 3zM221.500 146l-1 4-3-3z" fill="#222"/><path d="M238.500 149l3-2.500h3l2.500 2.500v3l-2.500 2.500h-3l-3-2.500z" fill="#fff" stroke="#222" stroke-width="1"/><text x="242.8" y="154" font-family="Liberation Sans" font-size="6" text-anchor="middle" fill="#111">1</text><path d="M238.500 151.500q-4 0-4 5" stroke="#222" fill="none" stroke-width="1.100"/><rect x="233" y="156.500" width="2.500" height="2.500" fill="#fff" stroke="#222" stroke-width="0.900"/><text x="263.5" y="158.500" font-family="Liberation Sans" font-weight="bold" font-size="17" text-anchor="middle" fill="#222">A</text><g stroke="#222" stroke-width="1" stroke-linejoin="round"><path d="M288 151l6-5 7.500 3.500-5.500 4.500z" fill="#f6f6f6"/><path d="M289 151.500v5l5 2.500v-6zM294 153.500l6.500-4v5.500l-6.500 4z" fill="#ddd"/><path d="M291 154.500l1.500 0.700v3l-1.500-0.700z" fill="#fff"/></g><path d="M309.5 150.75h6l-3 3.5z" fill="#333"/><circle cx="328.500" cy="150.500" r="4" fill="#f4f4f4" stroke="#b4b4b4" stroke-width="1.100"/><path d="M331 147l5.500 3.500-5.500 3.500" fill="#d8d8d8" stroke="#b4b4b4"/><path d="M328.500 154.500v4.500" stroke="#b4b4b4"/><path d="M347 146.500h6M347 150h5M347 153.500h4M347 157h3" stroke="#222" stroke-width="2"/><path d="M356 146.500h7M355 150h8M354 153.500h9M353 157h10" stroke="#222" stroke-width="1"/><path d="M357.500 144l-4.500 15" stroke="#2f86d8" stroke-width="1.300"/><rect x="382.500" y="144.500" width="10" height="8" fill="#fff" stroke="#333"/><rect x="379.500" y="147.500" width="10" height="8" fill="#fff" stroke="#333"/><rect x="381.500" y="150.500" width="8" height="7" fill="#fff" stroke="#333"/><path d="M388 153l6 6M394 153l-6 6" stroke="#d02020" stroke-width="1.800"/><rect x="403.500" y="144.500" width="11" height="8" fill="#fff" stroke="#333"/><path d="M403.500 146h11" stroke="#333" stroke-width="1.500"/><rect x="407.500" y="151.500" width="10" height="7" fill="#f4f4f4" stroke="#333"/><path d="M417 144.500v3M415.800 146l1.200-1.500 1.200 1.500M404.500 154v3M403.300 155.500l1.200 1.500 1.200-1.500" stroke="#111" fill="none" stroke-width="0.900"/><path d="M423.5 150.75h6l-3 3.5z" fill="#333"/><g transform="translate(437 144) scale(1.0)" stroke-linejoin="round"><path d="M3 0.500l13 6.500v7.500l-13-6.500z" fill="#4f9fe0" stroke="#1a5fa8" stroke-width="1"/><path d="M0.500 2l2.500-1.500 13 6.500-2.500 1.500zM0.500 2v7.500l13 6.500v-7.500zM13.500 16l2.500-1.500v-7.500" fill="none" stroke="#222" stroke-width="1"/><path d="M4.500 5.500l7 3.500v3l-7-3.500z" fill="#9fd0f4" stroke="#1a5fa8" stroke-width="0.600"/></g><path d="M461.500 147.500h8" stroke="#333" stroke-width="1.300"/><path d="M462 150.5h7l-3.5 4z" fill="#333"/><path d="M28.5 216.5h-3v4M25.500 226.5v4h3M37.500 216.5h3v4M40.500 226.5v4h-3" stroke="#222" fill="none" stroke-width="1.100"/><path d="M30.500 219.5h7.500l-1.500 8.500h-7.500z" fill="#e9e9e9" stroke="#333" stroke-width="1.100" stroke-linejoin="round"/><rect x="25.500" y="523.5" width="15" height="14" fill="#fff" stroke="#333"/><path d="M26 525h14" stroke="#333" stroke-width="2"/><rect x="27.500" y="528" width="4" height="3" fill="#666"/><path d="M33 528.5h2M36 528.5h3M33 531.5h2M36 531.5h3M33 534.5h6" stroke="#444"/><circle cx="29.500" cy="534.5" r="1.700" fill="#555"/><rect x="25.500" y="542.5" width="15" height="11" fill="#fff" stroke="#333"/><path d="M26 544h14" stroke="#333" stroke-width="2.500"/><path d="M26 547.5h14M26 550.5h14M30.500 545v8" stroke="#555"/><path d="M25.500 577.5h11l4 4v9h-15z" fill="#fff" stroke="#333"/><path d="M36.500 577.5v4h4" fill="none" stroke="#333"/><path d="M27.500 588.5v-6h6v6M29.500 588.5v-3h3M35.500 588.5v-4h3" stroke="#444" fill="none"/><path d="M26.500 613.8h6v6h-6zM35.500 613.8h4v12h-13v-3.500h9z" fill="#f4f4f4" stroke="#333"/><path d="M28.500 630.5h-2.500v14h2.500M37.500 630.5h2.500v14h-2.500" stroke="#333" fill="none" stroke-width="1.100"/><circle cx="31.500" cy="636.5" r="3.500" fill="#eee" stroke="#333"/><rect x="31.500" y="636.5" width="6" height="6" rx="1" fill="#e4e4e4" stroke="#333"/><rect x="26.500" y="654.5" width="8" height="5" rx="2.500" fill="none" stroke="#8a6a00" stroke-width="2.600"/><rect x="32.500" y="654.5" width="8" height="5" rx="2.500" fill="none" stroke="#8a6a00" stroke-width="2.600"/><rect x="26.500" y="654.5" width="8" height="5" rx="2.500" fill="none" stroke="#f2c020" stroke-width="1.500"/><rect x="32.500" y="654.5" width="8" height="5" rx="2.500" fill="none" stroke="#f2c020" stroke-width="1.500"/><defs><pattern id="hat" width="2" height="2" patternUnits="userSpaceOnUse"><rect width="1" height="1" fill="#333"/><rect x="1" y="1" width="1" height="1" fill="#333"/></pattern></defs><rect x="315.500" y="999.500" width="15" height="10" fill="#fff" stroke="#222"/><rect x="316" y="1000" width="14" height="9" fill="url(#hat)"/><path d="M337.500 1002.500l3-3h11.500l-3 3zM337.500 1002.500h11.500v7.500h-11.500zM349 1002.500l3-3v7.500l-3 3z" fill="#b9d9f0" stroke="#1a5fa8" stroke-width="1.100" stroke-linejoin="round"/><circle cx="363.500" cy="1003.500" r="4" fill="#ffd24a" stroke="#e08a10"/><path d="M363.500 997v2M363.500 1008v2M357 1003.500h2M368 1003.500h2M359 999l1.400 1.400M368 999l-1.400 1.400M359 1008l1.400-1.400" stroke="#e08a10"/><path d="M365.5 1005l6 6M371.5 1005l-6 6" stroke="#d01818" stroke-width="1.800"/><circle cx="385.500" cy="1003" r="4" fill="#e4f0fa" stroke="#2f7fc0" stroke-width="1.100"/><path d="M381 1009.500h8" stroke="#333" stroke-width="1.300"/><path d="M387 1005l6 6M393 1005l-6 6" stroke="#d01818" stroke-width="1.800"/><path d="M399 1001.500l3 1.500q0 4 3 5h5q2-1 2.500-3M402 1001.500h7" fill="none" stroke="#555" stroke-width="1"/><path d="M408.500 1005.500a2.800 2.800 0 1 1 4.500 0l-0.800 2h-2.900z" fill="#e4f0fa" stroke="#2f7fc0"/><path d="M420 1004.500h3v-4h9M423 1004.500v5.500M426 1003v6h8" stroke="#1a5fa8" fill="none" stroke-width="1.200"/><path d="M428.3 1002.8l6.4 6.4M434.7 1002.8l-6.4 6.4" stroke="#d01818" stroke-width="1.800"/><path d="M441 1004.500h3v-4h9M444 1004.500v5.500M447 1003v6h4" stroke="#1a5fa8" fill="none" stroke-width="1.200"/><path d="M450.500 1004.500a2.800 2.800 0 1 1 4.500 0l-0.800 2.500h-2.900z" fill="#e4f0fa" stroke="#2f7fc0"/><path d="M462 1004l6.500-5.500 6.500 5M463.500 1003.500v7h5v-4.500" fill="#f4f4f4" stroke="#333" stroke-width="1.100"/><rect x="469.500" y="1006.500" width="6" height="4.500" fill="#6fb88a" stroke="#2a6a48"/><path d="M470.500 1006.500v-2a2 2 0 0 1 4 0v2" fill="none" stroke="#555"/><path d="M482.500 1002l3 4.500q2 2.500 4.500 0 1-1.500 2.500-1.500t2.500-1.500l3-4" fill="none" stroke="#333" stroke-width="1.100"/><circle cx="487.500" cy="1006.500" r="2.300" fill="#fff" stroke="#333"/><circle cx="494" cy="1003.500" r="2" fill="#fff" stroke="#333"/><path d="M508.500 1004.500a2.800 2.800 0 1 1 4.500 0l-0.800 2.500h-2.900z" fill="#e4f0fa" stroke="#2f7fc0"/><path d="M509.500 1008.500h2.500" stroke="#2f7fc0"/><rect x="526" y="1000.500" width="12.500" height="9" fill="#fff" stroke="#111" stroke-width="1.400" stroke-dasharray="2 1"/><rect x="533.500" y="1004.500" width="5" height="4" fill="#fff" stroke="#111"/><circle cx="536" cy="1006.500" r="1" fill="#111"/><path d="M546 1003.500l5-4h7l-4 4zM546 1003.500v6.500M549 1003.500v6.500M552 1003.500v6.500" stroke="#c03030" fill="#eee" stroke-width="1"/><path d="M545.500 1003.500h9l4-4" fill="none" stroke="#333"/><circle cx="557" cy="1004.500" r="3" fill="#ffd24a" stroke="#e08a10"/><g opacity="0.8"><path d="M568.5 1003.8h7.7v7.7h-7.7z" fill="#ddd" stroke="#666" stroke-width="1" stroke-linejoin="round"/><path d="M568.5 1003.8l3.3 -3.3h7.7l-3.3 3.3z" fill="#eee" stroke="#666" stroke-width="1" stroke-linejoin="round"/><path d="M576.2 1003.8l3.3 -3.3v7.7l-3.3 3.3z" fill="#bbb" stroke="#666" stroke-width="1" stroke-linejoin="round"/></g><path d="M570 1004.500h6M570 1007.500h6" stroke="#666"/><path d="M588.500 997.500v13M601.500 997.500v5M589 1000h12M591 998.500l-2 1.500 2 1.500M599 998.500l2 1.500-2 1.500" stroke="#222" fill="none" stroke-width="1"/><path d="M589 1007.500h8" stroke="#222" stroke-dasharray="1.500 1"/><rect x="597.500" y="1005.500" width="6" height="5" fill="#bbb" stroke="#333"/><path d="M598.500 1005.500v-1.500a2 2 0 0 1 4 0v1.500" fill="none" stroke="#333"/><rect x="977" y="1018" width="25" height="21" fill="#fff" fill-opacity="0.28"/><rect x="1213" y="1018" width="51" height="21" fill="#fff" fill-opacity="0.28"/><rect x="1266" y="1018" width="25" height="21" fill="#fff" fill-opacity="0.28"/><rect x="1293" y="1018" width="25" height="21" fill="#fff" fill-opacity="0.28"/><rect x="1697" y="1018" width="24" height="21" fill="#fff" fill-opacity="0.28"/><rect x="1723" y="1018" width="24" height="21" fill="#fff" fill-opacity="0.28"/><rect x="1749" y="1018" width="24" height="21" fill="#fff" fill-opacity="0.28"/><rect x="1775" y="1018" width="24" height="21" fill="#fff" fill-opacity="0.28"/><rect x="1801" y="1018" width="24" height="21" fill="#fff" fill-opacity="0.28"/><path d="M985.5 1023.6h4.9v4.9h-4.9z" fill="#8fd08f" stroke="#2a6a2a" stroke-width="1" stroke-linejoin="round"/><path d="M985.5 1023.6l2.1 -2.1h4.9l-2.1 2.1z" fill="#c8ecc8" stroke="#2a6a2a" stroke-width="1" stroke-linejoin="round"/><path d="M990.4 1023.6l2.1 -2.1v4.9l-2.1 2.1z" fill="#5aa85a" stroke="#2a6a2a" stroke-width="1" stroke-linejoin="round"/><path d="M981.5 1027.75h5.25v5.25h-5.25z" fill="#9cc8f0" stroke="#1a5fa8" stroke-width="1" stroke-linejoin="round"/><path d="M981.5 1027.75l2.25 -2.25h5.25l-2.25 2.25z" fill="#d4e8fa" stroke="#1a5fa8" stroke-width="1" stroke-linejoin="round"/><path d="M986.75 1027.75l2.25 -2.25v5.25l-2.25 2.25z" fill="#5f98d0" stroke="#1a5fa8" stroke-width="1" stroke-linejoin="round"/><path d="M992.500 1024.500a2.200 2.200 0 1 1 3.500 0v8h-3.500z" fill="#fff" stroke="#1a3f80" stroke-width="1"/><path d="M1219.500 1034.500l3-5 2-4M1217 1035.500h7" stroke="#999" stroke-width="2" fill="none"/><rect x="1222.500" y="1021.500" width="10" height="6" rx="1.500" fill="#f4f4f4" stroke="#999" stroke-width="1.100"/><rect x="1271.500" y="1021.500" width="14.500" height="14" rx="1.500" fill="#fff" stroke="#222" stroke-width="1.200"/><path d="M1272 1024h14" stroke="#222" stroke-width="1.500"/><path d="M1274 1028h2.500M1278 1028h6M1274 1031.500h2.500M1278 1031.500h6" stroke="#222" stroke-width="1.300"/><rect x="1299.500" y="1021.500" width="12" height="12" fill="#aaa"/><path d="M1297 1030.500h7M1301.500 1028l2.500 2.500-2.500 2.500" stroke="#f0f0f0" stroke-width="1.300" fill="none"/><rect x="1701.500" y="1022.500" width="6" height="4" rx="2" fill="none" stroke="#c09000" stroke-width="1.800"/><rect x="1706" y="1022.500" width="6" height="4" rx="2" fill="none" stroke="#c09000" stroke-width="1.800"/><path d="M1708.5 1026.5v8l2-1.800 1.500 3.300 1.300-0.600-1.500-3.200h2.700z" fill="#fff" stroke="#222" stroke-width="0.900" stroke-linejoin="round"/><path d="M1728.500 1031.500l8-7M1728.500 1031.500h9M1730 1034h8" stroke="#1a5fa8" stroke-width="1.100" fill="none"/><path d="M1735.4 1021.4l5.2 5.2M1740.6 1021.4l-5.2 5.2" stroke="#d01818" stroke-width="1.800"/><path d="M1736.5 1027.5v8l2-1.800 1.500 3.300 1.300-0.600-1.500-3.200h2.700z" fill="#fff" stroke="#222" stroke-width="0.900" stroke-linejoin="round"/><path d="M1755 1024.500h8v4h-8zM1759 1028.500v6" stroke="#c06010" stroke-width="1.100" fill="#f0b060"/><path d="M1754 1022.500h10" stroke="#c06010" stroke-width="1.500"/><path d="M1762.5 1026.5v8l2-1.800 1.500 3.300 1.300-0.600-1.500-3.200h2.700z" fill="#fff" stroke="#222" stroke-width="0.900" stroke-linejoin="round"/><path d="M1780.500 1024l5-1.500v11l-5 1.500z" fill="#cfe6f7" stroke="#1a5fa8" stroke-width="1.100"/><path d="M1787.4 1021.4l5.2 5.2M1792.6 1021.4l-5.2 5.2" stroke="#d01818" stroke-width="1.800"/><path d="M1787.5 1027.5v8l2-1.800 1.500 3.300 1.300-0.600-1.500-3.200h2.700z" fill="#fff" stroke="#222" stroke-width="0.900" stroke-linejoin="round"/><path d="M1810.500 1020.500v8M1806.500 1024.500h8M1809 1022l1.500-1.500 1.500 1.500M1809 1027l1.500 1.500 1.500-1.500M1808 1023l-1.500 1.500 1.500 1.500M1813 1023l1.500 1.500-1.500 1.500" stroke="#111" fill="none" stroke-width="0.900"/><path d="M1814.5 1026.5v8l2-1.800 1.500 3.300 1.300-0.600-1.500-3.200h2.700z" fill="#fff" stroke="#222" stroke-width="0.900" stroke-linejoin="round"/><path d="M1828.500 1022.500h12l-4.500 6v6l-3-1.500v-4.500z" fill="#fff" stroke="#333" stroke-width="1.100" stroke-linejoin="round"/><g fill="#b8b8b8" transform="translate(16 0)"><rect x="1897" y="1003" width="2" height="2"/><rect x="1897" y="1007" width="2" height="2"/><rect x="1893" y="1007" width="2" height="2"/><rect x="1893" y="1011" width="2" height="2"/><rect x="1897" y="1011" width="2" height="2"/><rect x="1889" y="1011" width="2" height="2"/></g><defs><linearGradient id="gTb" x1="0" y1="0" x2="1" y2="0">
<stop offset="0" stop-color="#2e4f9d"/><stop offset="0.33" stop-color="#2f509e"/><stop offset="0.37" stop-color="#34529c"/><stop offset="0.44" stop-color="#4160a8"/>
<stop offset="0.50" stop-color="#4d6bb1"/><stop offset="0.62" stop-color="#4866ad"/><stop offset="0.74" stop-color="#4261a9"/><stop offset="0.84" stop-color="#3455a1"/><stop offset="0.90" stop-color="#2e4f9d"/><stop offset="1" stop-color="#2b4b99"/></linearGradient>
<radialGradient id="gFx" cx="0.4" cy="0.35" r="0.7"><stop offset="0" stop-color="#ffd23a"/><stop offset="0.55" stop-color="#f58a1a"/><stop offset="1" stop-color="#d9431a"/></radialGradient>
<radialGradient id="gSt" cx="0.5" cy="0.3" r="0.8"><stop offset="0" stop-color="#1b3a6a"/><stop offset="0.6" stop-color="#10204a"/><stop offset="1" stop-color="#1a7ab8"/></radialGradient>
<linearGradient id="gRv" x1="0" y1="0" x2="0" y2="1"><stop offset="0" stop-color="#f0f4fc"/><stop offset="0.45" stop-color="#7f9fe0"/><stop offset="1" stop-color="#2a56b8"/></linearGradient>
</defs><rect x="0" y="1040" width="1920" height="40" fill="url(#gTb)"/><path d="M640 1080l30-40h60l-40 40z" fill="#3b5ba8" fill-opacity="0.6"/><path d="M684 1080l14-30 50-10h108l-70 40z" fill="#27407f" fill-opacity="0.85"/><path d="M706 1052l120-7v4l-118 8zM720 1060l96-5v4l-94 6zM700 1072l96-6v4l-94 7zM745 1044l90-4v3l-88 5z" fill="#1c3168" fill-opacity="0.8"/><path d="M786 1080l70-40h215l-50 40z" fill="#5f7cbb" fill-opacity="0.95"/><path d="M1021 1080l50-40h180l-60 40z" fill="#5573b5" fill-opacity="0.9"/><path d="M1191 1080l60-40h200l-90 40z" fill="#4d6bb0" fill-opacity="0.85"/><path d="M1361 1080l90-40h170l-120 40z" fill="#4564ab" fill-opacity="0.8"/><path d="M1501 1080l120-40h90l-110 40z" fill="#3b5ba5" fill-opacity="0.8"/><path d="M900 1080l60-34 6 2-50 32zM1130 1080l40-40h10l-36 40zM1290 1080l50-40h12l-44 40zM1400 1080l40-30 8 2-34 28z" fill="#3f5ea6" fill-opacity="0.6"/><rect x="52.5" y="1040.500" width="58" height="39" fill="#ffffff" fill-opacity="0.13" stroke="#c8d4f0" stroke-opacity="0.35"/><rect x="114.5" y="1040.500" width="58" height="39" fill="#ffffff" fill-opacity="0.13" stroke="#c8d4f0" stroke-opacity="0.35"/><rect x="176.5" y="1040.500" width="58" height="39" fill="#ffffff" fill-opacity="0.13" stroke="#c8d4f0" stroke-opacity="0.35"/><rect x="300.5" y="1040.500" width="58" height="39" fill="#9fb2dc" fill-opacity="0.55" stroke="#dfe6f6" stroke-opacity="0.8"/><rect x="362.5" y="1040.500" width="58" height="39" fill="#ffffff" fill-opacity="0.13" stroke="#c8d4f0" stroke-opacity="0.35"/><rect x="424.5" y="1040.500" width="58" height="39" fill="#ffffff" fill-opacity="0.13" stroke="#c8d4f0" stroke-opacity="0.35"/><rect x="104.500" y="1041" width="5" height="38" fill="#fff" fill-opacity="0.08" stroke="#c8d4f0" stroke-opacity="0.3"/><rect x="412.500" y="1041" width="5" height="38" fill="#fff" fill-opacity="0.08" stroke="#c8d4f0" stroke-opacity="0.3"/><path d="M11 1050l11.500-1.600v10.600h-11.500zM24 1048.200l15-2.200v13h-15zM11 1060.500h11.500v10.600l-11.500-1.600zM24 1060.500h15v13l-15-2.200z" fill="#fff"/><circle cx="79" cy="1057.500" r="12.500" fill="#2f62c4"/><circle cx="82" cy="1053" r="6" fill="#5a8ae0" fill-opacity="0.7"/><path fill-rule="evenodd" d="M62.500 1059.500a15 15 0 1 0 30 0a15 15 0 1 0 -30 0zM72 1056.500a9.500 9.500 0 1 0 19 0a9.500 9.500 0 1 0 -19 0z" fill="url(#gFx)"/><path d="M63.500 1054q1.500-7 8-9.500-2 3-1.500 5 2.500-1.500 6.500-1-3 2-3.500 4.500 2 0.500 3 2-3 1-3.500 3.500t1.500 4q-4-0.500-6-3.500-1.500 3 0 6-4-3-4.500-11z" fill="#f0741a"/><path d="M64.500 1051q2-4.500 6-6-1.500 2.500-1 4.500-3 0-5 1.500z" fill="#ffc232"/><path d="M89 1048q4 4.500 3.500 11-1-4-3.500-5.500 0.500-3 0-5.500z" fill="#e9551a"/><circle cx="142.500" cy="1059.500" r="16" fill="#1ed760"/><path d="M132 1053q11-3 22 2.500M133.500 1059q9-2.500 18 2M135 1064.500q7-2 14 1.500" stroke="#111" stroke-width="2.600" fill="none" stroke-linecap="round"/><circle cx="152.500" cy="1069" r="6.500" fill="#3a8ae0" stroke="#1ed760" stroke-width="0.500"/><text x="152.500" y="1072.500" font-family="Liberation Sans" font-weight="bold" font-size="9.500" text-anchor="middle" fill="#fff">1</text><path d="M190 1050l2-3.500h8l2 3.500h17v22h-29z" fill="#f0c94a" stroke="#c89a20" stroke-width="0.800"/><path d="M194 1052.500h23v8h-23z" fill="#fff6d0"/><path d="M192 1056h25v17h-25z" fill="#f7dc7a" stroke="#d0a830" stroke-width="0.600"/><rect x="197" y="1047.500" width="3" height="2" fill="#d03030"/><rect x="201" y="1047.500" width="3" height="2" fill="#30a040"/><rect x="209" y="1051" width="3" height="2" fill="#3070d0"/><path d="M195 1075v-10h20v10h-4v-6h-12v6z" fill="#7ec8f0" stroke="#3a8ac0" stroke-width="0.800"/><circle cx="267" cy="1059.500" r="15.500" fill="url(#gSt)"/><circle cx="273" cy="1054.500" r="5" fill="none" stroke="#fff" stroke-width="2.200"/><circle cx="273" cy="1054.500" r="2" fill="#fff" fill-opacity="0.7"/><path d="M252 1059l9 4.500 8-6.500 3 4-7.500 6q-1 4-5 4t-5-4l-3.500-1.500z" fill="#fff"/><circle cx="260.500" cy="1066.500" r="2.600" fill="#10204a" stroke="#fff" stroke-width="1"/><rect x="313" y="1044" width="32" height="33" fill="url(#gRv)"/><path d="M321.500 1052l6-3.500 6 7-0.500 3-7 3 12 7-1.500 3-10-6.500-2 7.500-5-1z" fill="#1b3f9e"/><path d="M321.500 1052l6-3.500 6 7-0.500 3-7 3-5 1z" fill="#0f2c80"/><rect x="387" y="1046" width="15" height="25" fill="#fff"/><path d="M391 1050h9M391 1053.500h9M391 1057h9M391 1060.500h9M391 1064h9M391 1067.500h9" stroke="#2a4f9a" stroke-width="1.300"/><path d="M372 1047l18-3v30l-18-3z" fill="#2b5ab4"/><text x="380.500" y="1064" font-family="Liberation Sans" font-weight="bold" font-size="13" text-anchor="middle" fill="#fff">W</text><path d="M439 1063q-2-9 8-13 10-3 15 3 3 6-3 7-5 0-4 4 0 5-6 5-8-1-10-6z" fill="#dfe9f4" stroke="#7a98c0" stroke-width="0.800"/><circle cx="445" cy="1058" r="2.200" fill="#d03030"/><circle cx="451" cy="1053.500" r="2.200" fill="#f0c030"/><circle cx="457.500" cy="1055" r="2.200" fill="#30a040"/><circle cx="444.500" cy="1065" r="2.200" fill="#3070d0"/><path d="M464 1047l-11 26" stroke="#e89a40" stroke-width="2.600" stroke-linecap="round"/><path d="M465.500 1044l-2.500 6" stroke="#c07a50" stroke-width="2.200"/><path d="M453.500 1071l-1.500 5" stroke="#f0d8a0" stroke-width="2.400"/><path d="M1692.500 1064l4.500-4.500 4.500 4.500z" fill="#fff"/><path d="M1713 1056.500l6.500-1v6h-6.500zM1720.500 1055.300l7.500-1.300v7.500h-7.500zM1713 1062.500h6.500v6l-6.500-1zM1720.500 1062.500h7.500v7.500l-7.500-1.300z" fill="#fff"/><path d="M1737.500 1058.500h3l4.500-4v14l-4.500-4h-3z" fill="#fff"/><path d="M1747 1057.500q2 3.500 0 7M1749.500 1055.500q3.500 5.500 0 11M1752 1054q4.500 7 0 14" stroke="#fff" fill="none" stroke-width="1.100"/><path d="M1763.500 1054v16" stroke="#fff" stroke-width="1.500"/><path d="M1765 1055q3-1.500 6 0t6 0v7q-3 1.500-6 0t-6 0z" fill="#fff"/><g fill="#fff"><rect x="1786" y="1066" width="2" height="3"/><rect x="1789.500" y="1064" width="2" height="5"/><rect x="1793" y="1061.500" width="2" height="7.500"/><rect x="1796.500" y="1058.500" width="2" height="10.500"/><rect x="1800" y="1055" width="2" height="14"/></g><rect x="1816.500" y="1055.500" width="7" height="13" rx="1" fill="none" stroke="#fff" stroke-width="1.500"/><rect x="1818.500" y="1053.500" width="3" height="2" fill="#fff"/><path d="M1811 1054v3.500M1814 1054v3.500M1810 1057.500h5v2.500l-1.500 1.500h-2l-1.500-1.500zM1812.500 1061.500v4q0 2.500 3 2.500" stroke="#fff" fill="none" stroke-width="1.100"/><text x="1858" y="1057.500" font-family="Liberation Sans" font-size="12" fill="#fff" textLength="28" lengthAdjust="spacingAndGlyphs">23:00</text><text x="1843" y="1073.500" font-family="Liberation Sans" font-size="12" fill="#fff" textLength="57" lengthAdjust="spacingAndGlyphs">25/11/2015</text><defs><radialGradient id="gSh" cx="0.5" cy="0.5" r="0.5"><stop offset="0" stop-color="#9a9a9a" stop-opacity="0.55"/><stop offset="0.6" stop-color="#b0b0b0" stop-opacity="0.25"/><stop offset="1" stop-color="#fff" stop-opacity="0"/></radialGradient>
<linearGradient id="gCf" x1="0" y1="0" x2="0" y2="1"><stop offset="0" stop-color="#f0f0f0"/><stop offset="1" stop-color="#e2e2e2"/></linearGradient></defs><g transform="rotate(-4 1811 340)"><ellipse cx="1811.300" cy="341.500" rx="64.500" ry="37.500" fill="#f3f3f3" stroke="#d9d9d9" stroke-width="1" stroke-dasharray="3 1.500"/><ellipse cx="1811.300" cy="338" rx="48.500" ry="27.300" fill="#fff" stroke="#dcdcdc" stroke-width="1" stroke-dasharray="3 1.500"/></g><ellipse cx="1812" cy="342" rx="34" ry="17" fill="url(#gSh)"/><path d="M1783.100 280.700L1829.800 276.200 1841.500 298.900 1790.300 304.700Z" fill="#ececec" stroke="#c2c2c2" stroke-width="0.900"/><path d="M1790.300 304.700L1841.500 298.900 1839.500 339 1790.900 345.500Z" fill="url(#gCf)" stroke="#c2c2c2" stroke-width="0.900"/><path d="M1783.100 280.700L1790.300 304.700 1790.900 345.500 1785.500 316Z" fill="#dadada" stroke="#bdbdbd" stroke-width="0.900"/><text transform="translate(1798.500 328.500) rotate(-6.500) skewX(-3)" font-family="Liberation Sans" font-weight="bold" font-size="11.500" fill="#9c9ca6" textLength="35.500" lengthAdjust="spacingAndGlyphs">FRONT</text><text transform="translate(1802.500 292.500) rotate(-6) skewX(22) scale(1 0.62)" font-family="Liberation Sans" font-weight="bold" font-size="10" fill="#b4b4b4" textLength="19" lengthAdjust="spacingAndGlyphs">TOP</text><g font-family="Liberation Sans" font-weight="bold" fill="#dedede" stroke="#c2c2c2" stroke-width="1.100"><text transform="translate(1743.500 347) rotate(-10) skewX(22) scale(1.350 0.800)" font-size="16">W</text><text transform="translate(1859 332.500) rotate(-10) skewX(-22) scale(1.350 0.800)" font-size="15">E</text><text transform="translate(1815 380) rotate(-6) scale(1.450 0.950)" font-size="16">S</text></g><rect x="1866.500" y="392.500" width="33" height="115" rx="4" fill="#f7f7f7" stroke="#b7b7b7" stroke-width="1.300"/><circle cx="1892.500" cy="398.500" r="3" fill="#e0e0e0" stroke="#a8a8a8"/><path d="M1891 397l3 3M1894 397l-3 3" stroke="#909090" stroke-width="0.800"/><path d="M1873.500 418.500q0-5 5-5h9.500v9.500q0 5.500-5 5.500h-4.500q-5 0-5-5z" fill="#f0f0f0" stroke="#9a9a9a" stroke-width="1.100"/><circle cx="1882.500" cy="423" r="5.500" fill="#fff" stroke="#9a9a9a" stroke-width="1.100"/><path d="M1880 442h5l-2.5 3z" fill="#8a8a8a"/><path d="M1870 450.500h26" stroke="#d0d0d0"/><rect x="1874.500" y="458.500" width="10.500" height="10.500" fill="#9fd08c" stroke="#6aa85a" stroke-width="1"/><circle cx="1886.500" cy="468" r="3" fill="#fff" stroke="#888" stroke-width="1.200"/><path d="M1888.500 470.500l2.500 3" stroke="#888" stroke-width="1.600"/><path d="M1880 484h5l-2.5 3z" fill="#8a8a8a"/><circle cx="1892.500" cy="501.500" r="3" fill="#e0e0e0" stroke="#a8a8a8"/><path d="M1890.500 501.500h4M1891.500 503l1 1 1-1" stroke="#909090" stroke-width="0.800" fill="none"/></svg>
</body></html>
